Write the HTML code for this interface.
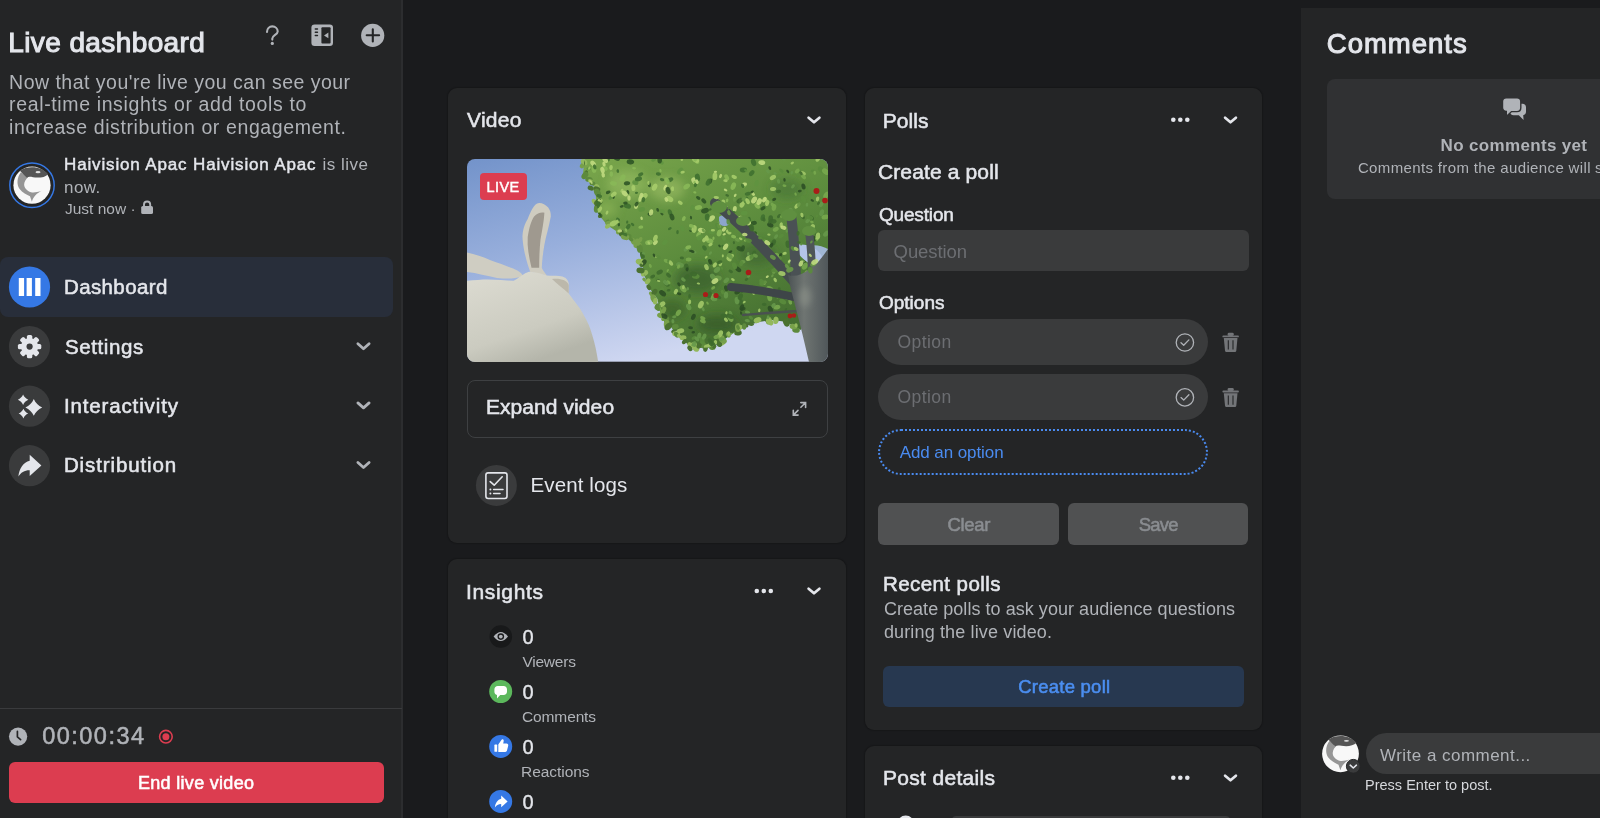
<!DOCTYPE html><html><head><meta charset="utf-8"><title>Live dashboard</title><style>
html,body{margin:0;padding:0}
body{width:1600px;height:818px;overflow:hidden;position:relative;background:#1a1b1d;font-family:"Liberation Sans",sans-serif}
.a{position:absolute}
.t{position:absolute;white-space:nowrap}
svg.a{overflow:visible}
</style></head><body>
<div class="a" style="left:0px;top:0px;width:402px;height:818px;background:#242526;border-radius:0px;"></div>
<div class="a" style="left:401px;top:0px;width:2px;height:818px;background:#2c2d2f;border-radius:0px;"></div>
<div class="a" style="left:0px;top:708px;width:402px;height:1px;background:#3a3b3d;border-radius:0px;"></div>
<svg class="a" style="left:260px;top:20px;" width="130" height="32" viewBox="260 20 130 32"><path d="M267 32 C267 28.6 269.4 26.4 272.3 26.4 C275.4 26.4 277.7 28.7 277.7 31.4 C277.7 34.6 272.3 35.2 272.3 38.6 V39.6" stroke="#b0b3b8" stroke-width="2.1" fill="none" stroke-linecap="round"/><circle cx="272.3" cy="43.4" r="1.6" fill="#b0b3b8"/><rect x="311.4" y="24.4" width="21.6" height="21.6" rx="3.2" fill="#b0b3b8"/><rect x="321.4" y="27.2" width="9.2" height="16.4" rx="1" fill="#242526"/><path d="M324 35.4 L328.4 32.6 V38.2 Z" fill="#b0b3b8"/><rect x="314.6" y="28.2" width="3.6" height="1.5" rx="0.7" fill="#242526"/><rect x="314.6" y="31.5" width="3.6" height="1.5" rx="0.7" fill="#242526"/><rect x="314.6" y="34.8" width="3.6" height="1.5" rx="0.7" fill="#242526"/><circle cx="372.7" cy="35.4" r="11.6" fill="#b0b3b8"/><path d="M366.7 35.3 H379.1 M372.8 29.2 V41.5" stroke="#242526" stroke-width="2.1" stroke-linecap="round"/></svg>
<svg class="a" style="left:5px;top:158px;" width="55" height="55" viewBox="5 158 55 55"><circle cx="32" cy="185.2" r="22.2" fill="none" stroke="#3578e5" stroke-width="1.45"/><circle cx="32" cy="185.2" r="18.6" fill="#f8f8f8"/><path d="M20.94 172.13 C16.92 177.16 16.42 184.19 19.43 188.72 C22.45 192.74 26.97 194.75 29.99 196.26 L31.90 201.79 C33.01 197.26 37.03 192.74 42.05 190.83 C37.03 192.24 34.01 192.74 30.99 192.24 C26.97 190.73 23.96 187.71 24.16 184.19 C24.36 181.18 25.97 179.17 27.98 177.16 Z" fill="#969696"/><path d="M19.73 170.62 C27.98 165.09 42.05 166.10 48.09 174.14 C45.07 177.66 38.03 177.96 33.01 177.16 C29.99 176.65 27.98 176.65 26.97 177.66 C23.96 175.15 21.95 173.14 19.73 170.62 Z" fill="#555555"/><ellipse cx="38.03" cy="172.13" rx="2.51" ry="1.01" fill="#e0e0e0"/></svg>
<svg class="a" style="left:138px;top:198px;" width="18" height="18" viewBox="138 198 18 18"><path d="M144 206.5 V204.5 C144 200.5 150.2 200.5 150.2 204.5 V206.5" stroke="#b0b3b8" stroke-width="1.9" fill="none"/><rect x="141.2" y="206" width="11.8" height="8" rx="1.6" fill="#b0b3b8"/></svg>
<div class="a" style="left:0px;top:257px;width:393px;height:60px;background:#282e3a;border-radius:8px;"></div>
<svg class="a" style="left:0px;top:260px;" width="60" height="230" viewBox="0 260 60 230"><circle cx="29.5" cy="287" r="20.6" fill="#3578e5"/><rect x="18.8" y="278" width="5.3" height="18" fill="#fff"/><rect x="26.6" y="278" width="5.3" height="18" fill="#fff"/><rect x="35.2" y="278" width="5.3" height="18" fill="#fff"/><circle cx="29.5" cy="346.6" r="20.6" fill="#3a3b3c"/><circle cx="29.5" cy="406.2" r="20.6" fill="#3a3b3c"/><circle cx="29.5" cy="465.7" r="20.6" fill="#3a3b3c"/><g fill="#e4e6eb"><circle cx="29.6" cy="346.6" r="8.6"/><rect x="26.9" y="334.9" width="5.4" height="23.4" rx="1.6" transform="rotate(0 29.6 346.6)"/><rect x="26.9" y="334.9" width="5.4" height="23.4" rx="1.6" transform="rotate(45 29.6 346.6)"/><rect x="26.9" y="334.9" width="5.4" height="23.4" rx="1.6" transform="rotate(90 29.6 346.6)"/><rect x="26.9" y="334.9" width="5.4" height="23.4" rx="1.6" transform="rotate(135 29.6 346.6)"/></g><circle cx="29.6" cy="346.6" r="3.1" fill="#3a3b3c"/><g fill="#e4e6eb"><path d="M33.8 399.0 C35.416999999999994 402.78 38.42 405.78299999999996 42.199999999999996 407.4 C38.42 409.017 35.416999999999994 412.02 33.8 415.79999999999995 C32.183 412.02 29.179999999999996 409.017 25.4 407.4 C29.179999999999996 405.78299999999996 32.183 402.78 33.8 399.0 Z"/><path d="M23.1 394.6 C24.101000000000003 396.94 25.96 398.79900000000004 28.3 399.8 C25.96 400.801 24.101000000000003 402.66 23.1 405.0 C22.099 402.66 20.240000000000002 400.801 17.900000000000002 399.8 C20.240000000000002 398.79900000000004 22.099 396.94 23.1 394.6 Z"/><path d="M23.4 408.8 C24.323999999999998 410.96000000000004 26.04 412.67600000000004 28.2 413.6 C26.04 414.524 24.323999999999998 416.24 23.4 418.40000000000003 C22.476 416.24 20.759999999999998 414.524 18.599999999999998 413.6 C20.759999999999998 412.67600000000004 22.476 410.96000000000004 23.4 408.8 Z"/></g><path d="M29.7 454.8 L41.4 465.5 L29.7 476 V470.3 C24.6 470.2 20.8 472.6 18.4 476.6 C19.1 468.6 23.4 462.2 29.7 460.8 Z" fill="#e4e6eb"/></svg>
<svg class="a" style="left:350px;top:335px;" width="30" height="140" viewBox="350 335 30 140"><path d="M357.9 343.7 L363.5 348.7 L369.1 343.7" stroke="#b0b3b8" stroke-width="2.8" fill="none" stroke-linecap="round" stroke-linejoin="round"/><path d="M357.9 402.9 L363.5 407.9 L369.1 402.9" stroke="#b0b3b8" stroke-width="2.8" fill="none" stroke-linecap="round" stroke-linejoin="round"/><path d="M357.9 462.5 L363.5 467.5 L369.1 462.5" stroke="#b0b3b8" stroke-width="2.8" fill="none" stroke-linecap="round" stroke-linejoin="round"/></svg>
<svg class="a" style="left:5px;top:724px;" width="175" height="26" viewBox="5 724 175 26"><circle cx="18.1" cy="736.6" r="9.15" fill="#b0b3b8"/><path d="M17.4 731.4 V736.9 L20.6 739.6" stroke="#242526" stroke-width="1.7" fill="none" stroke-linecap="round" stroke-linejoin="round"/><circle cx="165.9" cy="736.7" r="6.3" fill="none" stroke="#dc3d50" stroke-width="1.6"/><circle cx="165.9" cy="736.7" r="3.5" fill="#dc3d50"/></svg>
<div class="a" style="left:9.2px;top:762px;width:374.8px;height:41px;background:#dc3d50;border-radius:6px;"></div>
<div class="a" style="left:448px;top:88px;width:398.4px;height:454.6px;background:#242526;border-radius:9px;box-shadow:0 0 1px 0.5px rgba(0,0,0,0.16);"></div>
<div class="a" style="left:466.7px;top:159px;width:361.3px;height:202.7px;border-radius:8px;overflow:hidden"><svg width="361.3" height="202.7" viewBox="0 0 361.3 202.7" style="display:block">
<defs><linearGradient id="sky" x1="0" y1="0" x2="0.45" y2="1"><stop offset="0" stop-color="#7393ca"/><stop offset="0.45" stop-color="#98afdc"/><stop offset="1" stop-color="#cfd7f1"/></linearGradient>
<clipPath id="fc"><polygon points="118.0,-2.0 116.0,14.0 122.0,22.0 128.7,29.4 129.0,42.0 131.3,55.0 140.0,66.0 154.4,75.6 165.0,80.0 172.3,83.3 173.0,95.0 174.9,103.8 178.0,118.0 182.6,129.5 190.3,139.7 193.0,150.0 195.4,160.3 203.0,167.0 210.8,173.1 216.0,180.0 221.1,185.9 231.0,189.0 241.6,188.5 250.0,185.0 257.0,180.8 265.0,175.0 272.4,170.5 282.0,166.0 293.0,162.8 305.0,161.0 318.6,162.8 334.0,171.0 340.0,150.0 361.0,140.0 361.0,-2.0"/></clipPath>
<linearGradient id="fol" x1="0" y1="0" x2="0.6" y2="1"><stop offset="0" stop-color="#7aa64c"/><stop offset="0.6" stop-color="#5a8a3c"/><stop offset="1" stop-color="#456f31"/></linearGradient>
<linearGradient id="fur" x1="0" y1="0" x2="0.5" y2="1"><stop offset="0" stop-color="#dddcd2"/><stop offset="0.7" stop-color="#cbcbc0"/><stop offset="1" stop-color="#b4b5aa"/></linearGradient>
<linearGradient id="trunk" x1="0" y1="0" x2="1" y2="0"><stop offset="0" stop-color="#4c5354"/><stop offset="0.4" stop-color="#6f7572"/><stop offset="1" stop-color="#50575a"/></linearGradient>
<filter id="bl" x="-50%" y="-50%" width="200%" height="200%"><feGaussianBlur stdDeviation="5"/></filter><filter id="bl2" x="-50%" y="-50%" width="200%" height="200%"><feGaussianBlur stdDeviation="3"/></filter>
</defs>
<rect width="361.3" height="202.7" fill="url(#sky)"/>
<polygon points="118.0,-2.0 116.0,14.0 122.0,22.0 128.7,29.4 129.0,42.0 131.3,55.0 140.0,66.0 154.4,75.6 165.0,80.0 172.3,83.3 173.0,95.0 174.9,103.8 178.0,118.0 182.6,129.5 190.3,139.7 193.0,150.0 195.4,160.3 203.0,167.0 210.8,173.1 216.0,180.0 221.1,185.9 231.0,189.0 241.6,188.5 250.0,185.0 257.0,180.8 265.0,175.0 272.4,170.5 282.0,166.0 293.0,162.8 305.0,161.0 318.6,162.8 334.0,171.0 340.0,150.0 361.0,140.0 361.0,-2.0" fill="url(#fol)"/>
<g clip-path="url(#fc)"><g filter="url(#bl)">
<ellipse cx="230" cy="120" rx="22" ry="14" fill="#2f5226" opacity="0.55"/>
<ellipse cx="205" cy="150" rx="14" ry="10" fill="#2f5226" opacity="0.5"/>
<ellipse cx="290" cy="95" rx="18" ry="12" fill="#34582a" opacity="0.45"/>
<ellipse cx="250" cy="165" rx="20" ry="9" fill="#2c4c24" opacity="0.5"/>
<ellipse cx="320" cy="30" rx="16" ry="10" fill="#3a6330" opacity="0.4"/>
<ellipse cx="160" cy="25" rx="20" ry="14" fill="#a5c86a" opacity="0.45"/>
<ellipse cx="200" cy="30" rx="18" ry="12" fill="#b4d075" opacity="0.4"/>
<ellipse cx="140" cy="50" rx="10" ry="8" fill="#9cc060" opacity="0.45"/>
</g></g>
<ellipse cx="118.7" cy="5.6" rx="3.5" ry="2.4" transform="rotate(130 117.1 5.2)" fill="#77a04a"/>
<ellipse cx="117.8" cy="2.9" rx="3.4" ry="2.4" transform="rotate(24 117.6 1.0)" fill="#93b85c"/>
<ellipse cx="118.4" cy="4.3" rx="2.4" ry="1.7" transform="rotate(10 117.4 2.9)" fill="#93b85c"/>
<ellipse cx="121.9" cy="20.5" rx="3.7" ry="2.6" transform="rotate(3 121.8 21.7)" fill="#5d8a3c"/>
<ellipse cx="114.6" cy="12.6" rx="2.6" ry="1.8" transform="rotate(118 116.4 14.5)" fill="#4a7130"/>
<ellipse cx="118.2" cy="18.7" rx="4.1" ry="2.9" transform="rotate(127 118.6 17.5)" fill="#5d8a3c"/>
<ellipse cx="124.8" cy="29.9" rx="3.3" ry="2.3" transform="rotate(21 126.4 26.9)" fill="#4a7130"/>
<ellipse cx="122.6" cy="22.7" rx="2.7" ry="1.9" transform="rotate(27 124.1 24.3)" fill="#93b85c"/>
<ellipse cx="120.1" cy="20.9" rx="2.9" ry="2.0" transform="rotate(175 122.7 22.8)" fill="#5d8a3c"/>
<ellipse cx="126.0" cy="32.0" rx="4.3" ry="3.0" transform="rotate(101 128.8 32.1)" fill="#93b85c"/>
<ellipse cx="129.6" cy="29.7" rx="3.6" ry="2.6" transform="rotate(22 128.7 30.3)" fill="#4a7130"/>
<ellipse cx="129.6" cy="32.2" rx="4.4" ry="3.1" transform="rotate(63 128.8 33.6)" fill="#5d8a3c"/>
<ellipse cx="128.5" cy="43.6" rx="3.3" ry="2.3" transform="rotate(48 129.0 42.1)" fill="#93b85c"/>
<ellipse cx="131.0" cy="48.7" rx="4.5" ry="3.1" transform="rotate(98 130.2 48.6)" fill="#5d8a3c"/>
<ellipse cx="126.9" cy="49.5" rx="4.5" ry="3.1" transform="rotate(151 129.9 47.1)" fill="#4a7130"/>
<ellipse cx="137.9" cy="69.0" rx="2.2" ry="1.6" transform="rotate(154 140.0 66.0)" fill="#5d8a3c"/>
<ellipse cx="130.9" cy="53.5" rx="2.5" ry="1.8" transform="rotate(156 131.7 55.5)" fill="#4a7130"/>
<ellipse cx="135.9" cy="63.2" rx="3.1" ry="2.2" transform="rotate(162 138.5 64.1)" fill="#77a04a"/>
<ellipse cx="140.3" cy="64.8" rx="3.0" ry="2.1" transform="rotate(150 140.2 66.1)" fill="#93b85c"/>
<ellipse cx="150.9" cy="75.1" rx="2.5" ry="1.8" transform="rotate(79 152.0 74.0)" fill="#77a04a"/>
<ellipse cx="149.7" cy="75.5" rx="2.8" ry="1.9" transform="rotate(141 151.8 73.9)" fill="#77a04a"/>
<ellipse cx="161.1" cy="77.0" rx="3.1" ry="2.2" transform="rotate(12 161.7 78.6)" fill="#5d8a3c"/>
<ellipse cx="153.8" cy="77.8" rx="3.4" ry="2.4" transform="rotate(100 155.6 76.1)" fill="#4a7130"/>
<ellipse cx="158.3" cy="78.1" rx="4.3" ry="3.0" transform="rotate(17 158.9 77.5)" fill="#77a04a"/>
<ellipse cx="167.9" cy="81.8" rx="3.5" ry="2.4" transform="rotate(71 166.7 80.8)" fill="#77a04a"/>
<ellipse cx="168.8" cy="82.4" rx="2.7" ry="1.9" transform="rotate(114 171.7 83.0)" fill="#77a04a"/>
<ellipse cx="164.3" cy="81.1" rx="2.6" ry="1.8" transform="rotate(33 165.4 80.2)" fill="#5d8a3c"/>
<ellipse cx="174.5" cy="88.8" rx="4.2" ry="3.0" transform="rotate(176 172.6 87.5)" fill="#77a04a"/>
<ellipse cx="172.1" cy="90.0" rx="4.3" ry="3.0" transform="rotate(79 172.7 90.2)" fill="#5d8a3c"/>
<ellipse cx="171.7" cy="85.2" rx="3.7" ry="2.6" transform="rotate(81 172.3 83.5)" fill="#77a04a"/>
<ellipse cx="174.6" cy="105.5" rx="2.4" ry="1.7" transform="rotate(180 174.9 103.8)" fill="#77a04a"/>
<ellipse cx="173.3" cy="103.4" rx="4.3" ry="3.0" transform="rotate(19 174.5 102.0)" fill="#93b85c"/>
<ellipse cx="174.3" cy="101.4" rx="2.3" ry="1.6" transform="rotate(169 174.8 103.3)" fill="#93b85c"/>
<ellipse cx="173.4" cy="107.6" rx="2.2" ry="1.6" transform="rotate(29 176.1 109.2)" fill="#4a7130"/>
<ellipse cx="176.6" cy="118.0" rx="3.9" ry="2.7" transform="rotate(148 177.6 116.3)" fill="#93b85c"/>
<ellipse cx="173.7" cy="111.8" rx="4.1" ry="2.9" transform="rotate(7 176.3 110.1)" fill="#4a7130"/>
<ellipse cx="178.9" cy="126.4" rx="3.3" ry="2.3" transform="rotate(127 180.8 124.9)" fill="#93b85c"/>
<ellipse cx="177.7" cy="122.3" rx="2.2" ry="1.6" transform="rotate(51 179.2 120.9)" fill="#77a04a"/>
<ellipse cx="183.1" cy="127.2" rx="3.0" ry="2.1" transform="rotate(61 181.5 126.7)" fill="#4a7130"/>
<ellipse cx="185.9" cy="135.6" rx="2.8" ry="1.9" transform="rotate(51 185.7 133.6)" fill="#77a04a"/>
<ellipse cx="184.1" cy="132.1" rx="3.5" ry="2.5" transform="rotate(127 185.6 133.4)" fill="#4a7130"/>
<ellipse cx="189.6" cy="140.8" rx="4.2" ry="2.9" transform="rotate(70 189.0 138.0)" fill="#77a04a"/>
<ellipse cx="192.2" cy="143.0" rx="3.3" ry="2.3" transform="rotate(97 190.6 140.9)" fill="#93b85c"/>
<ellipse cx="193.3" cy="147.7" rx="3.8" ry="2.7" transform="rotate(82 192.1 146.6)" fill="#5d8a3c"/>
<ellipse cx="192.6" cy="149.6" rx="2.8" ry="2.0" transform="rotate(71 192.5 148.2)" fill="#4a7130"/>
<ellipse cx="190.8" cy="151.9" rx="4.0" ry="2.8" transform="rotate(116 193.7 153.2)" fill="#77a04a"/>
<ellipse cx="191.2" cy="149.0" rx="4.1" ry="2.9" transform="rotate(12 193.1 150.3)" fill="#5d8a3c"/>
<ellipse cx="194.3" cy="156.6" rx="3.6" ry="2.6" transform="rotate(19 194.1 154.6)" fill="#77a04a"/>
<ellipse cx="194.8" cy="159.7" rx="3.3" ry="2.3" transform="rotate(120 196.9 161.6)" fill="#5d8a3c"/>
<ellipse cx="195.5" cy="163.0" rx="2.8" ry="2.0" transform="rotate(133 196.8 161.5)" fill="#77a04a"/>
<ellipse cx="199.9" cy="161.4" rx="4.0" ry="2.8" transform="rotate(99 198.4 162.9)" fill="#77a04a"/>
<ellipse cx="208.0" cy="167.8" rx="2.7" ry="1.9" transform="rotate(140 206.5 169.7)" fill="#4a7130"/>
<ellipse cx="204.6" cy="171.4" rx="3.7" ry="2.6" transform="rotate(164 206.6 169.8)" fill="#5d8a3c"/>
<ellipse cx="206.6" cy="171.2" rx="4.3" ry="3.0" transform="rotate(137 204.7 168.3)" fill="#4a7130"/>
<ellipse cx="209.2" cy="175.4" rx="3.9" ry="2.7" transform="rotate(9 212.2 174.9)" fill="#93b85c"/>
<ellipse cx="211.0" cy="178.1" rx="3.2" ry="2.2" transform="rotate(55 212.6 175.5)" fill="#5d8a3c"/>
<ellipse cx="212.7" cy="177.5" rx="2.3" ry="1.6" transform="rotate(35 213.0 176.1)" fill="#93b85c"/>
<ellipse cx="217.4" cy="183.1" rx="3.4" ry="2.4" transform="rotate(176 216.8 180.9)" fill="#93b85c"/>
<ellipse cx="222.6" cy="184.0" rx="3.3" ry="2.3" transform="rotate(56 220.8 185.6)" fill="#93b85c"/>
<ellipse cx="219.3" cy="184.3" rx="2.9" ry="2.0" transform="rotate(133 218.7 183.1)" fill="#4a7130"/>
<ellipse cx="225.4" cy="189.4" rx="3.1" ry="2.2" transform="rotate(53 224.2 186.9)" fill="#4a7130"/>
<ellipse cx="229.1" cy="189.4" rx="4.4" ry="3.1" transform="rotate(51 229.5 188.5)" fill="#93b85c"/>
<ellipse cx="226.4" cy="185.7" rx="3.4" ry="2.4" transform="rotate(11 226.4 187.6)" fill="#93b85c"/>
<ellipse cx="234.4" cy="187.2" rx="4.5" ry="3.1" transform="rotate(42 236.8 188.7)" fill="#5d8a3c"/>
<ellipse cx="242.5" cy="190.5" rx="3.3" ry="2.3" transform="rotate(103 240.9 188.5)" fill="#4a7130"/>
<ellipse cx="232.3" cy="191.4" rx="3.3" ry="2.3" transform="rotate(121 233.6 188.9)" fill="#4a7130"/>
<ellipse cx="239.7" cy="187.4" rx="3.2" ry="2.2" transform="rotate(179 242.5 188.1)" fill="#5d8a3c"/>
<ellipse cx="239.0" cy="187.8" rx="2.6" ry="1.8" transform="rotate(90 241.9 188.4)" fill="#77a04a"/>
<ellipse cx="247.5" cy="184.9" rx="2.4" ry="1.7" transform="rotate(130 246.8 186.3)" fill="#4a7130"/>
<ellipse cx="256.4" cy="180.1" rx="3.8" ry="2.7" transform="rotate(162 255.0 182.0)" fill="#93b85c"/>
<ellipse cx="255.5" cy="183.9" rx="3.6" ry="2.5" transform="rotate(136 255.8 181.5)" fill="#77a04a"/>
<ellipse cx="253.8" cy="185.1" rx="4.2" ry="2.9" transform="rotate(59 253.7 182.8)" fill="#4a7130"/>
<ellipse cx="262.8" cy="178.2" rx="2.9" ry="2.0" transform="rotate(55 264.2 175.6)" fill="#77a04a"/>
<ellipse cx="262.3" cy="177.3" rx="2.5" ry="1.8" transform="rotate(66 264.1 175.7)" fill="#93b85c"/>
<ellipse cx="256.9" cy="182.2" rx="4.1" ry="2.9" transform="rotate(32 257.8 180.2)" fill="#77a04a"/>
<ellipse cx="265.1" cy="172.2" rx="3.8" ry="2.6" transform="rotate(174 268.0 173.2)" fill="#4a7130"/>
<ellipse cx="269.3" cy="171.4" rx="4.4" ry="3.1" transform="rotate(87 271.7 170.9)" fill="#77a04a"/>
<ellipse cx="268.1" cy="173.2" rx="3.3" ry="2.3" transform="rotate(157 270.9 171.4)" fill="#93b85c"/>
<ellipse cx="271.8" cy="172.0" rx="2.6" ry="1.8" transform="rotate(72 273.8 169.8)" fill="#5d8a3c"/>
<ellipse cx="278.4" cy="166.3" rx="2.5" ry="1.8" transform="rotate(24 278.0 167.9)" fill="#4a7130"/>
<ellipse cx="274.9" cy="167.8" rx="3.2" ry="2.2" transform="rotate(95 276.2 168.7)" fill="#5d8a3c"/>
<ellipse cx="287.0" cy="164.0" rx="2.3" ry="1.6" transform="rotate(92 289.0 164.0)" fill="#4a7130"/>
<ellipse cx="284.3" cy="165.3" rx="2.6" ry="1.9" transform="rotate(3 286.5 164.7)" fill="#4a7130"/>
<ellipse cx="292.3" cy="165.4" rx="4.0" ry="2.8" transform="rotate(161 291.8 163.1)" fill="#93b85c"/>
<ellipse cx="299.8" cy="161.5" rx="2.6" ry="1.8" transform="rotate(66 299.8 161.8)" fill="#4a7130"/>
<ellipse cx="304.8" cy="163.2" rx="3.9" ry="2.7" transform="rotate(103 303.9 161.2)" fill="#77a04a"/>
<ellipse cx="304.2" cy="163.0" rx="4.2" ry="3.0" transform="rotate(46 303.8 161.2)" fill="#93b85c"/>
<ellipse cx="308.8" cy="160.9" rx="2.6" ry="1.8" transform="rotate(25 307.8 161.4)" fill="#5d8a3c"/>
<ellipse cx="318.6" cy="160.8" rx="4.5" ry="3.1" transform="rotate(69 317.1 162.6)" fill="#4a7130"/>
<ellipse cx="309.4" cy="162.3" rx="3.7" ry="2.6" transform="rotate(99 309.6 161.6)" fill="#93b85c"/>
<ellipse cx="329.3" cy="171.0" rx="3.8" ry="2.7" transform="rotate(5 328.5 168.1)" fill="#5d8a3c"/>
<ellipse cx="326.4" cy="167.9" rx="3.9" ry="2.7" transform="rotate(12 328.1 167.8)" fill="#77a04a"/>
<ellipse cx="326.9" cy="167.5" rx="2.2" ry="1.6" transform="rotate(87 328.6 168.1)" fill="#93b85c"/>
<ellipse cx="341.8" cy="151.9" rx="3.5" ry="2.5" transform="rotate(165 339.8 150.7)" fill="#5d8a3c"/>
<ellipse cx="339.1" cy="159.4" rx="3.7" ry="2.6" transform="rotate(40 337.3 159.5)" fill="#93b85c"/>
<ellipse cx="336.3" cy="162.1" rx="2.6" ry="1.8" transform="rotate(14 336.8 161.1)" fill="#93b85c"/>
<path d="M252 58 C256 55 262 57 264 63 C261 68 255 68 252 64 Z" fill="#8fa7d6" opacity="0.75"/>
<g clip-path="url(#fc)">
<ellipse cx="347.4" cy="79.6" rx="2.9" ry="1.9" transform="rotate(79 347.4 79.6)" fill="#2c4f25" opacity="0.9"/>
<ellipse cx="203.0" cy="53.4" rx="3.2" ry="2.1" transform="rotate(72 203.0 53.4)" fill="#3f7030" opacity="0.9"/>
<ellipse cx="277.2" cy="143.1" rx="1.7" ry="1.1" transform="rotate(149 277.2 143.1)" fill="#a2c868" opacity="0.9"/>
<ellipse cx="122.7" cy="28.4" rx="3.4" ry="2.2" transform="rotate(13 122.7 28.4)" fill="#5f9440" opacity="0.9"/>
<ellipse cx="335.5" cy="143.2" rx="1.7" ry="1.1" transform="rotate(81 335.5 143.2)" fill="#66984a" opacity="0.9"/>
<ellipse cx="130.3" cy="173.7" rx="2.6" ry="1.7" transform="rotate(64 130.3 173.7)" fill="#3e6a2e" opacity="0.9"/>
<ellipse cx="354.3" cy="45.3" rx="2.9" ry="1.9" transform="rotate(119 354.3 45.3)" fill="#66984a" opacity="0.9"/>
<ellipse cx="147.9" cy="184.2" rx="2.2" ry="1.4" transform="rotate(29 147.9 184.2)" fill="#66984a" opacity="0.9"/>
<ellipse cx="124.5" cy="78.9" rx="1.9" ry="1.2" transform="rotate(91 124.5 78.9)" fill="#a6cc6a" opacity="0.9"/>
<ellipse cx="243.5" cy="22.1" rx="2.7" ry="1.7" transform="rotate(106 243.5 22.1)" fill="#2f5526" opacity="0.9"/>
<ellipse cx="225.4" cy="48.9" rx="3.0" ry="1.9" transform="rotate(93 225.4 48.9)" fill="#5f9440" opacity="0.9"/>
<ellipse cx="305.7" cy="101.0" rx="4.0" ry="2.6" transform="rotate(32 305.7 101.0)" fill="#5a8c3c" opacity="0.9"/>
<ellipse cx="171.4" cy="20.1" rx="3.7" ry="2.4" transform="rotate(159 171.4 20.1)" fill="#3f7030" opacity="0.9"/>
<ellipse cx="322.8" cy="51.3" rx="3.1" ry="2.0" transform="rotate(144 322.8 51.3)" fill="#66984a" opacity="0.9"/>
<ellipse cx="286.1" cy="34.9" rx="2.3" ry="1.5" transform="rotate(48 286.1 34.9)" fill="#c0da80" opacity="0.9"/>
<ellipse cx="349.0" cy="95.4" rx="3.2" ry="2.1" transform="rotate(174 349.0 95.4)" fill="#a2c868" opacity="0.9"/>
<ellipse cx="121.8" cy="9.8" rx="2.3" ry="1.5" transform="rotate(6 121.8 9.8)" fill="#5f9440" opacity="0.9"/>
<ellipse cx="267.2" cy="17.9" rx="2.9" ry="1.9" transform="rotate(22 267.2 17.9)" fill="#a6cc6a" opacity="0.9"/>
<ellipse cx="339.3" cy="29.2" rx="2.2" ry="1.4" transform="rotate(123 339.3 29.2)" fill="#5a8c3c" opacity="0.9"/>
<ellipse cx="231.2" cy="38.9" rx="2.4" ry="1.6" transform="rotate(34 231.2 38.9)" fill="#2f5526" opacity="0.9"/>
<ellipse cx="320.8" cy="12.4" rx="1.9" ry="1.2" transform="rotate(54 320.8 12.4)" fill="#2c4f25" opacity="0.9"/>
<ellipse cx="222.6" cy="143.0" rx="2.5" ry="1.6" transform="rotate(94 222.6 143.0)" fill="#a2c868" opacity="0.9"/>
<ellipse cx="150.2" cy="160.3" rx="3.0" ry="2.0" transform="rotate(140 150.2 160.3)" fill="#5a8c3c" opacity="0.9"/>
<ellipse cx="301.0" cy="158.3" rx="2.0" ry="1.3" transform="rotate(94 301.0 158.3)" fill="#66984a" opacity="0.9"/>
<ellipse cx="256.6" cy="87.6" rx="2.4" ry="1.5" transform="rotate(21 256.6 87.6)" fill="#3f7030" opacity="0.9"/>
<ellipse cx="219.6" cy="108.2" rx="3.6" ry="2.3" transform="rotate(76 219.6 108.2)" fill="#3e6a2e" opacity="0.9"/>
<ellipse cx="317.1" cy="-0.2" rx="2.3" ry="1.5" transform="rotate(154 317.1 -0.2)" fill="#66984a" opacity="0.9"/>
<ellipse cx="132.3" cy="56.9" rx="3.3" ry="2.2" transform="rotate(83 132.3 56.9)" fill="#2f5526" opacity="0.9"/>
<ellipse cx="182.4" cy="25.7" rx="2.5" ry="1.6" transform="rotate(83 182.4 25.7)" fill="#2f5526" opacity="0.9"/>
<ellipse cx="203.2" cy="20.8" rx="3.3" ry="2.1" transform="rotate(152 203.2 20.8)" fill="#3f7030" opacity="0.9"/>
<ellipse cx="340.7" cy="180.3" rx="3.8" ry="2.5" transform="rotate(135 340.7 180.3)" fill="#3e6a2e" opacity="0.9"/>
<ellipse cx="312.0" cy="57.1" rx="2.4" ry="1.5" transform="rotate(132 312.0 57.1)" fill="#3e6a2e" opacity="0.9"/>
<ellipse cx="173.8" cy="68.2" rx="2.5" ry="1.6" transform="rotate(173 173.8 68.2)" fill="#88b858" opacity="0.9"/>
<ellipse cx="210.5" cy="73.2" rx="2.1" ry="1.3" transform="rotate(94 210.5 73.2)" fill="#3f7030" opacity="0.9"/>
<ellipse cx="310.5" cy="102.9" rx="3.6" ry="2.3" transform="rotate(45 310.5 102.9)" fill="#2c4f25" opacity="0.9"/>
<ellipse cx="156.0" cy="145.2" rx="3.7" ry="2.4" transform="rotate(5 156.0 145.2)" fill="#5a8c3c" opacity="0.9"/>
<ellipse cx="167.1" cy="9.2" rx="2.0" ry="1.3" transform="rotate(5 167.1 9.2)" fill="#88b858" opacity="0.9"/>
<ellipse cx="274.1" cy="154.0" rx="1.8" ry="1.1" transform="rotate(78 274.1 154.0)" fill="#2c4f25" opacity="0.9"/>
<ellipse cx="308.2" cy="14.3" rx="1.8" ry="1.2" transform="rotate(26 308.2 14.3)" fill="#66984a" opacity="0.9"/>
<ellipse cx="335.9" cy="14.4" rx="3.1" ry="2.0" transform="rotate(24 335.9 14.4)" fill="#a2c868" opacity="0.9"/>
<ellipse cx="297.7" cy="123.9" rx="2.2" ry="1.4" transform="rotate(125 297.7 123.9)" fill="#a2c868" opacity="0.9"/>
<ellipse cx="302.6" cy="99.2" rx="3.4" ry="2.2" transform="rotate(89 302.6 99.2)" fill="#3e6a2e" opacity="0.9"/>
<ellipse cx="196.1" cy="185.8" rx="3.2" ry="2.1" transform="rotate(124 196.1 185.8)" fill="#3e6a2e" opacity="0.9"/>
<ellipse cx="245.8" cy="137.9" rx="3.3" ry="2.1" transform="rotate(105 245.8 137.9)" fill="#78a84e" opacity="0.9"/>
<ellipse cx="300.5" cy="189.2" rx="2.4" ry="1.6" transform="rotate(96 300.5 189.2)" fill="#78a84e" opacity="0.9"/>
<ellipse cx="319.6" cy="170.4" rx="3.9" ry="2.5" transform="rotate(6 319.6 170.4)" fill="#66984a" opacity="0.9"/>
<ellipse cx="242.4" cy="135.8" rx="3.5" ry="2.3" transform="rotate(107 242.4 135.8)" fill="#3e6a2e" opacity="0.9"/>
<ellipse cx="340.0" cy="45.7" rx="2.0" ry="1.3" transform="rotate(96 340.0 45.7)" fill="#66984a" opacity="0.9"/>
<ellipse cx="282.3" cy="60.3" rx="2.5" ry="1.6" transform="rotate(74 282.3 60.3)" fill="#3f7030" opacity="0.9"/>
<ellipse cx="180.2" cy="169.9" rx="2.7" ry="1.8" transform="rotate(29 180.2 169.9)" fill="#66984a" opacity="0.9"/>
<ellipse cx="187.6" cy="28.2" rx="3.8" ry="2.5" transform="rotate(117 187.6 28.2)" fill="#a6cc6a" opacity="0.9"/>
<ellipse cx="116.3" cy="91.3" rx="3.5" ry="2.3" transform="rotate(27 116.3 91.3)" fill="#5a8c3c" opacity="0.9"/>
<ellipse cx="161.2" cy="67.7" rx="3.0" ry="2.0" transform="rotate(120 161.2 67.7)" fill="#3f7030" opacity="0.9"/>
<ellipse cx="260.1" cy="41.4" rx="2.0" ry="1.3" transform="rotate(103 260.1 41.4)" fill="#88b858" opacity="0.9"/>
<ellipse cx="155.0" cy="145.0" rx="2.3" ry="1.5" transform="rotate(140 155.0 145.0)" fill="#2c4f25" opacity="0.9"/>
<ellipse cx="231.4" cy="48.5" rx="3.7" ry="2.4" transform="rotate(169 231.4 48.5)" fill="#88b858" opacity="0.9"/>
<ellipse cx="248.3" cy="183.7" rx="2.8" ry="1.8" transform="rotate(102 248.3 183.7)" fill="#a2c868" opacity="0.9"/>
<ellipse cx="124.4" cy="181.8" rx="3.5" ry="2.3" transform="rotate(135 124.4 181.8)" fill="#3e6a2e" opacity="0.9"/>
<ellipse cx="309.9" cy="148.2" rx="3.5" ry="2.3" transform="rotate(168 309.9 148.2)" fill="#78a84e" opacity="0.9"/>
<ellipse cx="342.1" cy="171.1" rx="3.7" ry="2.4" transform="rotate(115 342.1 171.1)" fill="#5a8c3c" opacity="0.9"/>
<ellipse cx="310.4" cy="136.4" rx="3.1" ry="2.0" transform="rotate(106 310.4 136.4)" fill="#a2c868" opacity="0.9"/>
<ellipse cx="151.1" cy="60.4" rx="2.2" ry="1.4" transform="rotate(33 151.1 60.4)" fill="#3f7030" opacity="0.9"/>
<ellipse cx="270.6" cy="190.7" rx="2.2" ry="1.5" transform="rotate(13 270.6 190.7)" fill="#2c4f25" opacity="0.9"/>
<ellipse cx="149.5" cy="147.5" rx="1.6" ry="1.0" transform="rotate(32 149.5 147.5)" fill="#a2c868" opacity="0.9"/>
<ellipse cx="132.5" cy="50.4" rx="3.3" ry="2.2" transform="rotate(122 132.5 50.4)" fill="#a6cc6a" opacity="0.9"/>
<ellipse cx="284.7" cy="14.1" rx="3.4" ry="2.2" transform="rotate(129 284.7 14.1)" fill="#3f7030" opacity="0.9"/>
<ellipse cx="187.6" cy="151.1" rx="2.6" ry="1.7" transform="rotate(23 187.6 151.1)" fill="#66984a" opacity="0.9"/>
<ellipse cx="306.6" cy="83.4" rx="1.7" ry="1.1" transform="rotate(134 306.6 83.4)" fill="#3e6a2e" opacity="0.9"/>
<ellipse cx="235.1" cy="181.6" rx="3.9" ry="2.5" transform="rotate(79 235.1 181.6)" fill="#5a8c3c" opacity="0.9"/>
<ellipse cx="213.0" cy="105.9" rx="4.0" ry="2.6" transform="rotate(17 213.0 105.9)" fill="#66984a" opacity="0.9"/>
<ellipse cx="201.6" cy="131.3" rx="1.9" ry="1.2" transform="rotate(173 201.6 131.3)" fill="#3e6a2e" opacity="0.9"/>
<ellipse cx="227.0" cy="185.6" rx="3.6" ry="2.3" transform="rotate(113 227.0 185.6)" fill="#66984a" opacity="0.9"/>
<ellipse cx="115.1" cy="71.2" rx="3.3" ry="2.1" transform="rotate(75 115.1 71.2)" fill="#c0da80" opacity="0.9"/>
<ellipse cx="252.5" cy="86.9" rx="1.6" ry="1.1" transform="rotate(52 252.5 86.9)" fill="#2f5526" opacity="0.9"/>
<ellipse cx="336.5" cy="27.5" rx="3.1" ry="2.0" transform="rotate(76 336.5 27.5)" fill="#2c4f25" opacity="0.9"/>
<ellipse cx="349.6" cy="144.5" rx="2.9" ry="1.9" transform="rotate(65 349.6 144.5)" fill="#78a84e" opacity="0.9"/>
<ellipse cx="159.0" cy="71.1" rx="1.9" ry="1.2" transform="rotate(70 159.0 71.1)" fill="#88b858" opacity="0.9"/>
<ellipse cx="252.1" cy="138.4" rx="2.4" ry="1.6" transform="rotate(23 252.1 138.4)" fill="#3e6a2e" opacity="0.9"/>
<ellipse cx="137.4" cy="118.6" rx="1.9" ry="1.2" transform="rotate(45 137.4 118.6)" fill="#66984a" opacity="0.9"/>
<ellipse cx="156.8" cy="76.0" rx="3.6" ry="2.3" transform="rotate(180 156.8 76.0)" fill="#3f7030" opacity="0.9"/>
<ellipse cx="134.4" cy="42.0" rx="2.0" ry="1.3" transform="rotate(111 134.4 42.0)" fill="#a6cc6a" opacity="0.9"/>
<ellipse cx="213.3" cy="12.1" rx="3.8" ry="2.5" transform="rotate(130 213.3 12.1)" fill="#5f9440" opacity="0.9"/>
<ellipse cx="146.6" cy="37.9" rx="2.0" ry="1.3" transform="rotate(98 146.6 37.9)" fill="#2f5526" opacity="0.9"/>
<ellipse cx="232.2" cy="176.7" rx="3.1" ry="2.0" transform="rotate(102 232.2 176.7)" fill="#66984a" opacity="0.9"/>
<ellipse cx="264.7" cy="59.6" rx="3.5" ry="2.3" transform="rotate(169 264.7 59.6)" fill="#c0da80" opacity="0.9"/>
<ellipse cx="357.4" cy="100.8" rx="2.2" ry="1.4" transform="rotate(87 357.4 100.8)" fill="#a2c868" opacity="0.9"/>
<ellipse cx="188.4" cy="83.6" rx="2.9" ry="1.9" transform="rotate(130 188.4 83.6)" fill="#c0da80" opacity="0.9"/>
<ellipse cx="194.9" cy="54.9" rx="1.8" ry="1.2" transform="rotate(40 194.9 54.9)" fill="#2f5526" opacity="0.9"/>
<ellipse cx="175.2" cy="102.5" rx="2.3" ry="1.5" transform="rotate(90 175.2 102.5)" fill="#a2c868" opacity="0.9"/>
<ellipse cx="264.4" cy="97.6" rx="3.0" ry="1.9" transform="rotate(132 264.4 97.6)" fill="#a2c868" opacity="0.9"/>
<ellipse cx="360.6" cy="135.1" rx="3.8" ry="2.5" transform="rotate(6 360.6 135.1)" fill="#2c4f25" opacity="0.9"/>
<ellipse cx="268.2" cy="36.4" rx="1.8" ry="1.2" transform="rotate(122 268.2 36.4)" fill="#c0da80" opacity="0.9"/>
<ellipse cx="255.5" cy="133.2" rx="2.4" ry="1.6" transform="rotate(68 255.5 133.2)" fill="#5a8c3c" opacity="0.9"/>
<ellipse cx="227.3" cy="22.1" rx="3.9" ry="2.6" transform="rotate(61 227.3 22.1)" fill="#c0da80" opacity="0.9"/>
<ellipse cx="337.1" cy="103.4" rx="2.9" ry="1.9" transform="rotate(67 337.1 103.4)" fill="#2c4f25" opacity="0.9"/>
<ellipse cx="154.0" cy="142.7" rx="3.8" ry="2.4" transform="rotate(153 154.0 142.7)" fill="#5a8c3c" opacity="0.9"/>
<ellipse cx="148.3" cy="179.2" rx="1.6" ry="1.0" transform="rotate(93 148.3 179.2)" fill="#66984a" opacity="0.9"/>
<ellipse cx="172.0" cy="109.3" rx="3.6" ry="2.3" transform="rotate(152 172.0 109.3)" fill="#a2c868" opacity="0.9"/>
<ellipse cx="248.4" cy="12.8" rx="1.7" ry="1.1" transform="rotate(168 248.4 12.8)" fill="#c0da80" opacity="0.9"/>
<ellipse cx="146.4" cy="144.7" rx="3.6" ry="2.4" transform="rotate(157 146.4 144.7)" fill="#3e6a2e" opacity="0.9"/>
<ellipse cx="259.4" cy="153.9" rx="1.6" ry="1.1" transform="rotate(105 259.4 153.9)" fill="#a2c868" opacity="0.9"/>
<ellipse cx="228.5" cy="25.7" rx="2.5" ry="1.6" transform="rotate(103 228.5 25.7)" fill="#3f7030" opacity="0.9"/>
<ellipse cx="155.2" cy="98.8" rx="2.2" ry="1.5" transform="rotate(85 155.2 98.8)" fill="#2c4f25" opacity="0.9"/>
<ellipse cx="125.3" cy="150.1" rx="3.3" ry="2.2" transform="rotate(103 125.3 150.1)" fill="#a2c868" opacity="0.9"/>
<ellipse cx="350.9" cy="114.4" rx="2.7" ry="1.8" transform="rotate(159 350.9 114.4)" fill="#3e6a2e" opacity="0.9"/>
<ellipse cx="339.4" cy="107.6" rx="2.6" ry="1.7" transform="rotate(124 339.4 107.6)" fill="#5a8c3c" opacity="0.9"/>
<ellipse cx="333.4" cy="87.9" rx="3.8" ry="2.5" transform="rotate(104 333.4 87.9)" fill="#66984a" opacity="0.9"/>
<ellipse cx="317.5" cy="20.8" rx="1.9" ry="1.2" transform="rotate(84 317.5 20.8)" fill="#2c4f25" opacity="0.9"/>
<ellipse cx="242.7" cy="81.9" rx="3.8" ry="2.5" transform="rotate(13 242.7 81.9)" fill="#88b858" opacity="0.9"/>
<ellipse cx="185.7" cy="117.5" rx="2.6" ry="1.7" transform="rotate(152 185.7 117.5)" fill="#3e6a2e" opacity="0.9"/>
<ellipse cx="192.2" cy="151.2" rx="3.7" ry="2.4" transform="rotate(62 192.2 151.2)" fill="#78a84e" opacity="0.9"/>
<ellipse cx="143.0" cy="84.7" rx="2.8" ry="1.8" transform="rotate(13 143.0 84.7)" fill="#5f9440" opacity="0.9"/>
<ellipse cx="230.5" cy="18.4" rx="3.8" ry="2.5" transform="rotate(78 230.5 18.4)" fill="#3f7030" opacity="0.9"/>
<ellipse cx="275.6" cy="180.4" rx="3.7" ry="2.4" transform="rotate(170 275.6 180.4)" fill="#66984a" opacity="0.9"/>
<ellipse cx="203.8" cy="104.0" rx="3.0" ry="1.9" transform="rotate(56 203.8 104.0)" fill="#a2c868" opacity="0.9"/>
<ellipse cx="273.7" cy="79.8" rx="1.9" ry="1.2" transform="rotate(25 273.7 79.8)" fill="#a6cc6a" opacity="0.9"/>
<ellipse cx="241.4" cy="23.2" rx="3.7" ry="2.4" transform="rotate(116 241.4 23.2)" fill="#3f7030" opacity="0.9"/>
<ellipse cx="112.1" cy="45.3" rx="2.3" ry="1.5" transform="rotate(44 112.1 45.3)" fill="#88b858" opacity="0.9"/>
<ellipse cx="127.6" cy="171.7" rx="3.6" ry="2.3" transform="rotate(36 127.6 171.7)" fill="#3e6a2e" opacity="0.9"/>
<ellipse cx="200.8" cy="111.6" rx="1.7" ry="1.1" transform="rotate(116 200.8 111.6)" fill="#78a84e" opacity="0.9"/>
<ellipse cx="335.7" cy="57.7" rx="2.8" ry="1.8" transform="rotate(52 335.7 57.7)" fill="#3e6a2e" opacity="0.9"/>
<ellipse cx="162.5" cy="164.6" rx="3.3" ry="2.1" transform="rotate(50 162.5 164.6)" fill="#78a84e" opacity="0.9"/>
<ellipse cx="190.7" cy="164.7" rx="3.8" ry="2.4" transform="rotate(44 190.7 164.7)" fill="#78a84e" opacity="0.9"/>
<ellipse cx="270.2" cy="133.4" rx="2.9" ry="1.9" transform="rotate(161 270.2 133.4)" fill="#2c4f25" opacity="0.9"/>
<ellipse cx="170.8" cy="182.2" rx="3.9" ry="2.6" transform="rotate(27 170.8 182.2)" fill="#66984a" opacity="0.9"/>
<ellipse cx="188.2" cy="156.6" rx="3.9" ry="2.5" transform="rotate(107 188.2 156.6)" fill="#5a8c3c" opacity="0.9"/>
<ellipse cx="289.6" cy="24.2" rx="3.3" ry="2.1" transform="rotate(106 289.6 24.2)" fill="#5f9440" opacity="0.9"/>
<ellipse cx="131.7" cy="41.3" rx="2.3" ry="1.5" transform="rotate(176 131.7 41.3)" fill="#2f5526" opacity="0.9"/>
<ellipse cx="160.9" cy="33.1" rx="2.2" ry="1.4" transform="rotate(75 160.9 33.1)" fill="#2f5526" opacity="0.9"/>
<ellipse cx="308.8" cy="70.3" rx="3.2" ry="2.1" transform="rotate(151 308.8 70.3)" fill="#78a84e" opacity="0.9"/>
<ellipse cx="240.5" cy="187.6" rx="3.7" ry="2.4" transform="rotate(170 240.5 187.6)" fill="#a2c868" opacity="0.9"/>
<ellipse cx="168.3" cy="23.7" rx="3.2" ry="2.1" transform="rotate(19 168.3 23.7)" fill="#5f9440" opacity="0.9"/>
<ellipse cx="221.6" cy="100.5" rx="2.9" ry="1.9" transform="rotate(1 221.6 100.5)" fill="#78a84e" opacity="0.9"/>
<ellipse cx="261.3" cy="53.2" rx="2.2" ry="1.4" transform="rotate(22 261.3 53.2)" fill="#3f7030" opacity="0.9"/>
<ellipse cx="153.0" cy="189.7" rx="2.1" ry="1.3" transform="rotate(71 153.0 189.7)" fill="#a2c868" opacity="0.9"/>
<ellipse cx="294.8" cy="3.6" rx="3.5" ry="2.3" transform="rotate(8 294.8 3.6)" fill="#c0da80" opacity="0.9"/>
<ellipse cx="266.9" cy="175.8" rx="3.0" ry="2.0" transform="rotate(127 266.9 175.8)" fill="#78a84e" opacity="0.9"/>
<ellipse cx="127.0" cy="10.4" rx="3.5" ry="2.3" transform="rotate(82 127.0 10.4)" fill="#88b858" opacity="0.9"/>
<ellipse cx="275.9" cy="149.9" rx="2.8" ry="1.8" transform="rotate(162 275.9 149.9)" fill="#2c4f25" opacity="0.9"/>
<ellipse cx="282.4" cy="99.0" rx="3.9" ry="2.5" transform="rotate(152 282.4 99.0)" fill="#a2c868" opacity="0.9"/>
<ellipse cx="306.1" cy="30.0" rx="3.1" ry="2.0" transform="rotate(171 306.1 30.0)" fill="#a2c868" opacity="0.9"/>
<ellipse cx="221.7" cy="148.0" rx="3.5" ry="2.3" transform="rotate(60 221.7 148.0)" fill="#66984a" opacity="0.9"/>
<ellipse cx="176.7" cy="103.6" rx="3.6" ry="2.4" transform="rotate(127 176.7 103.6)" fill="#2c4f25" opacity="0.9"/>
<ellipse cx="177.1" cy="37.3" rx="3.9" ry="2.6" transform="rotate(146 177.1 37.3)" fill="#a6cc6a" opacity="0.9"/>
<ellipse cx="223.6" cy="168.8" rx="2.4" ry="1.5" transform="rotate(4 223.6 168.8)" fill="#2c4f25" opacity="0.9"/>
<ellipse cx="263.5" cy="154.4" rx="2.8" ry="1.8" transform="rotate(67 263.5 154.4)" fill="#66984a" opacity="0.9"/>
<ellipse cx="325.3" cy="4.0" rx="1.9" ry="1.2" transform="rotate(145 325.3 4.0)" fill="#a2c868" opacity="0.9"/>
<ellipse cx="271.3" cy="110.4" rx="3.3" ry="2.2" transform="rotate(37 271.3 110.4)" fill="#2c4f25" opacity="0.9"/>
<ellipse cx="125.4" cy="80.5" rx="3.3" ry="2.1" transform="rotate(134 125.4 80.5)" fill="#3f7030" opacity="0.9"/>
<ellipse cx="306.4" cy="146.5" rx="2.8" ry="1.8" transform="rotate(130 306.4 146.5)" fill="#66984a" opacity="0.9"/>
<ellipse cx="154.7" cy="47.4" rx="2.0" ry="1.3" transform="rotate(168 154.7 47.4)" fill="#2f5526" opacity="0.9"/>
<ellipse cx="318.9" cy="150.6" rx="1.7" ry="1.1" transform="rotate(119 318.9 150.6)" fill="#3e6a2e" opacity="0.9"/>
<ellipse cx="202.7" cy="40.0" rx="3.9" ry="2.6" transform="rotate(32 202.7 40.0)" fill="#a6cc6a" opacity="0.9"/>
<ellipse cx="233.9" cy="145.7" rx="4.0" ry="2.6" transform="rotate(116 233.9 145.7)" fill="#a2c868" opacity="0.9"/>
<ellipse cx="241.9" cy="189.2" rx="1.6" ry="1.0" transform="rotate(134 241.9 189.2)" fill="#3e6a2e" opacity="0.9"/>
<ellipse cx="147.2" cy="74.2" rx="2.3" ry="1.5" transform="rotate(19 147.2 74.2)" fill="#5f9440" opacity="0.9"/>
<ellipse cx="353.9" cy="129.9" rx="3.3" ry="2.2" transform="rotate(156 353.9 129.9)" fill="#66984a" opacity="0.9"/>
<ellipse cx="169.2" cy="47.1" rx="2.9" ry="1.9" transform="rotate(107 169.2 47.1)" fill="#c0da80" opacity="0.9"/>
<ellipse cx="226.9" cy="178.9" rx="2.5" ry="1.6" transform="rotate(156 226.9 178.9)" fill="#5a8c3c" opacity="0.9"/>
<ellipse cx="166.4" cy="29.1" rx="3.0" ry="2.0" transform="rotate(87 166.4 29.1)" fill="#a6cc6a" opacity="0.9"/>
<ellipse cx="253.3" cy="174.9" rx="3.7" ry="2.4" transform="rotate(118 253.3 174.9)" fill="#a2c868" opacity="0.9"/>
<ellipse cx="326.1" cy="179.5" rx="2.1" ry="1.4" transform="rotate(12 326.1 179.5)" fill="#3e6a2e" opacity="0.9"/>
<ellipse cx="165.6" cy="65.4" rx="2.0" ry="1.3" transform="rotate(41 165.6 65.4)" fill="#3f7030" opacity="0.9"/>
<ellipse cx="231.6" cy="75.6" rx="3.0" ry="2.0" transform="rotate(120 231.6 75.6)" fill="#88b858" opacity="0.9"/>
<ellipse cx="223.3" cy="190.7" rx="3.2" ry="2.1" transform="rotate(52 223.3 190.7)" fill="#3e6a2e" opacity="0.9"/>
<ellipse cx="246.5" cy="79.3" rx="1.7" ry="1.1" transform="rotate(92 246.5 79.3)" fill="#88b858" opacity="0.9"/>
<ellipse cx="348.2" cy="118.5" rx="2.8" ry="1.8" transform="rotate(67 348.2 118.5)" fill="#66984a" opacity="0.9"/>
<ellipse cx="239.5" cy="108.1" rx="3.2" ry="2.1" transform="rotate(68 239.5 108.1)" fill="#a2c868" opacity="0.9"/>
<ellipse cx="137.7" cy="9.1" rx="3.3" ry="2.2" transform="rotate(35 137.7 9.1)" fill="#88b858" opacity="0.9"/>
<ellipse cx="302.7" cy="138.4" rx="3.8" ry="2.5" transform="rotate(82 302.7 138.4)" fill="#78a84e" opacity="0.9"/>
<ellipse cx="320.9" cy="85.3" rx="3.7" ry="2.4" transform="rotate(83 320.9 85.3)" fill="#3e6a2e" opacity="0.9"/>
<ellipse cx="175.8" cy="168.5" rx="3.2" ry="2.1" transform="rotate(100 175.8 168.5)" fill="#5a8c3c" opacity="0.9"/>
<ellipse cx="263.4" cy="92.8" rx="2.1" ry="1.3" transform="rotate(152 263.4 92.8)" fill="#2c4f25" opacity="0.9"/>
<ellipse cx="143.8" cy="38.5" rx="2.6" ry="1.7" transform="rotate(139 143.8 38.5)" fill="#5f9440" opacity="0.9"/>
<ellipse cx="284.8" cy="98.3" rx="2.9" ry="1.9" transform="rotate(115 284.8 98.3)" fill="#5a8c3c" opacity="0.9"/>
<ellipse cx="277.9" cy="26.6" rx="2.1" ry="1.4" transform="rotate(136 277.9 26.6)" fill="#88b858" opacity="0.9"/>
<ellipse cx="289.5" cy="76.6" rx="2.5" ry="1.6" transform="rotate(57 289.5 76.6)" fill="#88b858" opacity="0.9"/>
<ellipse cx="137.6" cy="69.9" rx="3.1" ry="2.0" transform="rotate(10 137.6 69.9)" fill="#c0da80" opacity="0.9"/>
<ellipse cx="323.2" cy="142.9" rx="2.8" ry="1.8" transform="rotate(76 323.2 142.9)" fill="#78a84e" opacity="0.9"/>
<ellipse cx="276.4" cy="11.0" rx="3.6" ry="2.4" transform="rotate(176 276.4 11.0)" fill="#3f7030" opacity="0.9"/>
<ellipse cx="200.0" cy="21.7" rx="3.5" ry="2.2" transform="rotate(60 200.0 21.7)" fill="#88b858" opacity="0.9"/>
<ellipse cx="307.0" cy="48.4" rx="3.5" ry="2.3" transform="rotate(100 307.0 48.4)" fill="#78a84e" opacity="0.9"/>
<ellipse cx="234.7" cy="93.0" rx="3.8" ry="2.5" transform="rotate(127 234.7 93.0)" fill="#5a8c3c" opacity="0.9"/>
<ellipse cx="287.1" cy="41.0" rx="3.8" ry="2.5" transform="rotate(121 287.1 41.0)" fill="#c0da80" opacity="0.9"/>
<ellipse cx="303.3" cy="66.0" rx="3.3" ry="2.2" transform="rotate(23 303.3 66.0)" fill="#2c4f25" opacity="0.9"/>
<ellipse cx="297.0" cy="174.1" rx="3.5" ry="2.3" transform="rotate(149 297.0 174.1)" fill="#3e6a2e" opacity="0.9"/>
<ellipse cx="176.0" cy="163.5" rx="2.3" ry="1.5" transform="rotate(100 176.0 163.5)" fill="#78a84e" opacity="0.9"/>
<ellipse cx="142.0" cy="174.5" rx="3.8" ry="2.5" transform="rotate(13 142.0 174.5)" fill="#5a8c3c" opacity="0.9"/>
<ellipse cx="205.9" cy="162.3" rx="2.3" ry="1.5" transform="rotate(83 205.9 162.3)" fill="#66984a" opacity="0.9"/>
<ellipse cx="332.6" cy="12.0" rx="1.7" ry="1.1" transform="rotate(95 332.6 12.0)" fill="#5a8c3c" opacity="0.9"/>
<ellipse cx="252.9" cy="48.8" rx="3.2" ry="2.1" transform="rotate(164 252.9 48.8)" fill="#c0da80" opacity="0.9"/>
<ellipse cx="228.8" cy="117.4" rx="3.9" ry="2.5" transform="rotate(7 228.8 117.4)" fill="#5a8c3c" opacity="0.9"/>
<ellipse cx="255.5" cy="180.8" rx="3.5" ry="2.2" transform="rotate(12 255.5 180.8)" fill="#66984a" opacity="0.9"/>
<ellipse cx="266.6" cy="77.7" rx="2.6" ry="1.7" transform="rotate(17 266.6 77.7)" fill="#88b858" opacity="0.9"/>
<ellipse cx="318.6" cy="168.7" rx="2.5" ry="1.6" transform="rotate(9 318.6 168.7)" fill="#3e6a2e" opacity="0.9"/>
<ellipse cx="312.2" cy="130.6" rx="2.3" ry="1.5" transform="rotate(92 312.2 130.6)" fill="#3e6a2e" opacity="0.9"/>
<ellipse cx="229.8" cy="2.1" rx="3.1" ry="2.0" transform="rotate(58 229.8 2.1)" fill="#88b858" opacity="0.9"/>
<ellipse cx="176.3" cy="40.7" rx="2.8" ry="1.9" transform="rotate(100 176.3 40.7)" fill="#3f7030" opacity="0.9"/>
<ellipse cx="112.9" cy="104.1" rx="3.6" ry="2.4" transform="rotate(20 112.9 104.1)" fill="#2c4f25" opacity="0.9"/>
<ellipse cx="267.5" cy="106.8" rx="3.6" ry="2.3" transform="rotate(67 267.5 106.8)" fill="#5a8c3c" opacity="0.9"/>
<ellipse cx="198.3" cy="169.9" rx="2.4" ry="1.5" transform="rotate(53 198.3 169.9)" fill="#66984a" opacity="0.9"/>
<ellipse cx="285.2" cy="131.2" rx="3.9" ry="2.5" transform="rotate(40 285.2 131.2)" fill="#a2c868" opacity="0.9"/>
<ellipse cx="194.9" cy="131.7" rx="3.5" ry="2.3" transform="rotate(94 194.9 131.7)" fill="#5a8c3c" opacity="0.9"/>
<ellipse cx="215.3" cy="69.2" rx="3.2" ry="2.1" transform="rotate(60 215.3 69.2)" fill="#5f9440" opacity="0.9"/>
<ellipse cx="272.9" cy="68.3" rx="3.3" ry="2.1" transform="rotate(32 272.9 68.3)" fill="#3f7030" opacity="0.9"/>
<ellipse cx="330.5" cy="189.9" rx="3.6" ry="2.3" transform="rotate(79 330.5 189.9)" fill="#66984a" opacity="0.9"/>
<ellipse cx="140.1" cy="85.6" rx="3.5" ry="2.2" transform="rotate(10 140.1 85.6)" fill="#5f9440" opacity="0.9"/>
<ellipse cx="152.5" cy="166.1" rx="3.7" ry="2.4" transform="rotate(88 152.5 166.1)" fill="#78a84e" opacity="0.9"/>
<ellipse cx="175.2" cy="96.4" rx="3.5" ry="2.3" transform="rotate(64 175.2 96.4)" fill="#3e6a2e" opacity="0.9"/>
<ellipse cx="290.3" cy="46.9" rx="3.3" ry="2.2" transform="rotate(46 290.3 46.9)" fill="#88b858" opacity="0.9"/>
<ellipse cx="195.1" cy="145.3" rx="3.6" ry="2.4" transform="rotate(145 195.1 145.3)" fill="#a2c868" opacity="0.9"/>
<ellipse cx="356.9" cy="122.4" rx="1.9" ry="1.2" transform="rotate(68 356.9 122.4)" fill="#66984a" opacity="0.9"/>
<ellipse cx="311.5" cy="22.3" rx="2.5" ry="1.6" transform="rotate(74 311.5 22.3)" fill="#66984a" opacity="0.9"/>
<ellipse cx="169.5" cy="33.8" rx="1.6" ry="1.1" transform="rotate(177 169.5 33.8)" fill="#3f7030" opacity="0.9"/>
<ellipse cx="346.3" cy="186.3" rx="1.9" ry="1.2" transform="rotate(69 346.3 186.3)" fill="#66984a" opacity="0.9"/>
<ellipse cx="216.4" cy="120.5" rx="2.6" ry="1.7" transform="rotate(35 216.4 120.5)" fill="#66984a" opacity="0.9"/>
<ellipse cx="124.1" cy="136.4" rx="1.9" ry="1.2" transform="rotate(49 124.1 136.4)" fill="#78a84e" opacity="0.9"/>
<ellipse cx="183.2" cy="139.9" rx="4.0" ry="2.6" transform="rotate(103 183.2 139.9)" fill="#78a84e" opacity="0.9"/>
<ellipse cx="194.2" cy="3.1" rx="2.9" ry="1.9" transform="rotate(43 194.2 3.1)" fill="#5f9440" opacity="0.9"/>
<ellipse cx="205.0" cy="58.0" rx="3.5" ry="2.3" transform="rotate(72 205.0 58.0)" fill="#2f5526" opacity="0.9"/>
<ellipse cx="167.7" cy="138.0" rx="2.6" ry="1.7" transform="rotate(147 167.7 138.0)" fill="#a2c868" opacity="0.9"/>
<ellipse cx="208.9" cy="132.6" rx="2.9" ry="1.9" transform="rotate(113 208.9 132.6)" fill="#a2c868" opacity="0.9"/>
<ellipse cx="155.6" cy="18.8" rx="3.8" ry="2.5" transform="rotate(124 155.6 18.8)" fill="#88b858" opacity="0.9"/>
<ellipse cx="219.7" cy="27.5" rx="3.7" ry="2.4" transform="rotate(144 219.7 27.5)" fill="#88b858" opacity="0.9"/>
<ellipse cx="253.6" cy="51.1" rx="2.6" ry="1.7" transform="rotate(58 253.6 51.1)" fill="#88b858" opacity="0.9"/>
<ellipse cx="132.2" cy="37.0" rx="2.9" ry="1.9" transform="rotate(13 132.2 37.0)" fill="#3f7030" opacity="0.9"/>
<ellipse cx="149.8" cy="-0.6" rx="3.4" ry="2.2" transform="rotate(20 149.8 -0.6)" fill="#2f5526" opacity="0.9"/>
<ellipse cx="113.0" cy="63.2" rx="1.9" ry="1.3" transform="rotate(104 113.0 63.2)" fill="#c0da80" opacity="0.9"/>
<ellipse cx="232.6" cy="78.4" rx="3.5" ry="2.3" transform="rotate(142 232.6 78.4)" fill="#5f9440" opacity="0.9"/>
<ellipse cx="126.4" cy="104.8" rx="3.2" ry="2.1" transform="rotate(64 126.4 104.8)" fill="#2c4f25" opacity="0.9"/>
<ellipse cx="181.0" cy="180.1" rx="3.7" ry="2.4" transform="rotate(146 181.0 180.1)" fill="#3e6a2e" opacity="0.9"/>
<ellipse cx="319.6" cy="138.6" rx="2.0" ry="1.3" transform="rotate(43 319.6 138.6)" fill="#78a84e" opacity="0.9"/>
<ellipse cx="246.2" cy="128.9" rx="2.3" ry="1.5" transform="rotate(142 246.2 128.9)" fill="#78a84e" opacity="0.9"/>
<ellipse cx="189.2" cy="97.8" rx="1.6" ry="1.1" transform="rotate(16 189.2 97.8)" fill="#a2c868" opacity="0.9"/>
<ellipse cx="350.9" cy="0.1" rx="2.9" ry="1.9" transform="rotate(126 350.9 0.1)" fill="#a2c868" opacity="0.9"/>
<ellipse cx="211.4" cy="153.8" rx="3.6" ry="2.3" transform="rotate(123 211.4 153.8)" fill="#78a84e" opacity="0.9"/>
<ellipse cx="212.2" cy="134.8" rx="2.2" ry="1.4" transform="rotate(6 212.2 134.8)" fill="#2c4f25" opacity="0.9"/>
<ellipse cx="114.4" cy="25.3" rx="2.4" ry="1.5" transform="rotate(94 114.4 25.3)" fill="#2f5526" opacity="0.9"/>
<ellipse cx="238.0" cy="51.7" rx="4.0" ry="2.6" transform="rotate(163 238.0 51.7)" fill="#2f5526" opacity="0.9"/>
<ellipse cx="224.0" cy="58.6" rx="1.8" ry="1.1" transform="rotate(82 224.0 58.6)" fill="#2f5526" opacity="0.9"/>
<ellipse cx="260.0" cy="49.3" rx="2.1" ry="1.4" transform="rotate(54 260.0 49.3)" fill="#c0da80" opacity="0.9"/>
<ellipse cx="123.7" cy="23.4" rx="2.3" ry="1.5" transform="rotate(45 123.7 23.4)" fill="#c0da80" opacity="0.9"/>
<ellipse cx="198.5" cy="28.2" rx="2.5" ry="1.6" transform="rotate(110 198.5 28.2)" fill="#c0da80" opacity="0.9"/>
<ellipse cx="117.5" cy="75.5" rx="1.7" ry="1.1" transform="rotate(82 117.5 75.5)" fill="#a6cc6a" opacity="0.9"/>
<ellipse cx="348.7" cy="160.9" rx="3.4" ry="2.2" transform="rotate(44 348.7 160.9)" fill="#78a84e" opacity="0.9"/>
<ellipse cx="191.9" cy="144.3" rx="1.9" ry="1.2" transform="rotate(110 191.9 144.3)" fill="#5a8c3c" opacity="0.9"/>
<ellipse cx="229.9" cy="180.1" rx="2.8" ry="1.8" transform="rotate(45 229.9 180.1)" fill="#66984a" opacity="0.9"/>
<ellipse cx="314.3" cy="11.6" rx="2.5" ry="1.6" transform="rotate(46 314.3 11.6)" fill="#5a8c3c" opacity="0.9"/>
<ellipse cx="305.6" cy="99.9" rx="1.6" ry="1.1" transform="rotate(162 305.6 99.9)" fill="#66984a" opacity="0.9"/>
<ellipse cx="277.0" cy="174.7" rx="1.7" ry="1.1" transform="rotate(157 277.0 174.7)" fill="#2c4f25" opacity="0.9"/>
<ellipse cx="197.8" cy="83.3" rx="3.3" ry="2.2" transform="rotate(129 197.8 83.3)" fill="#5f9440" opacity="0.9"/>
<ellipse cx="353.4" cy="177.4" rx="1.9" ry="1.2" transform="rotate(176 353.4 177.4)" fill="#66984a" opacity="0.9"/>
<ellipse cx="297.3" cy="82.6" rx="2.7" ry="1.8" transform="rotate(128 297.3 82.6)" fill="#5f9440" opacity="0.9"/>
<ellipse cx="169.3" cy="114.5" rx="3.0" ry="1.9" transform="rotate(8 169.3 114.5)" fill="#2c4f25" opacity="0.9"/>
<ellipse cx="243.5" cy="85.6" rx="2.3" ry="1.5" transform="rotate(152 243.5 85.6)" fill="#a6cc6a" opacity="0.9"/>
<ellipse cx="125.6" cy="61.0" rx="2.9" ry="1.9" transform="rotate(65 125.6 61.0)" fill="#88b858" opacity="0.9"/>
<ellipse cx="295.8" cy="58.7" rx="3.4" ry="2.2" transform="rotate(102 295.8 58.7)" fill="#3f7030" opacity="0.9"/>
<ellipse cx="125.1" cy="185.8" rx="3.4" ry="2.2" transform="rotate(28 125.1 185.8)" fill="#3e6a2e" opacity="0.9"/>
<ellipse cx="170.3" cy="161.0" rx="3.2" ry="2.1" transform="rotate(29 170.3 161.0)" fill="#a2c868" opacity="0.9"/>
<ellipse cx="310.6" cy="97.3" rx="4.0" ry="2.6" transform="rotate(47 310.6 97.3)" fill="#78a84e" opacity="0.9"/>
<ellipse cx="328.7" cy="136.1" rx="2.2" ry="1.4" transform="rotate(116 328.7 136.1)" fill="#5a8c3c" opacity="0.9"/>
<ellipse cx="163.6" cy="0.8" rx="2.6" ry="1.7" transform="rotate(71 163.6 0.8)" fill="#5f9440" opacity="0.9"/>
<ellipse cx="351.5" cy="44.3" rx="1.9" ry="1.2" transform="rotate(125 351.5 44.3)" fill="#3e6a2e" opacity="0.9"/>
<ellipse cx="330.3" cy="12.0" rx="2.8" ry="1.8" transform="rotate(140 330.3 12.0)" fill="#78a84e" opacity="0.9"/>
<ellipse cx="354.2" cy="10.8" rx="3.9" ry="2.5" transform="rotate(45 354.2 10.8)" fill="#5a8c3c" opacity="0.9"/>
<ellipse cx="137.0" cy="5.1" rx="2.4" ry="1.6" transform="rotate(73 137.0 5.1)" fill="#c0da80" opacity="0.9"/>
<ellipse cx="141.2" cy="33.3" rx="2.5" ry="1.6" transform="rotate(157 141.2 33.3)" fill="#2f5526" opacity="0.9"/>
<ellipse cx="228.0" cy="92.9" rx="1.8" ry="1.2" transform="rotate(52 228.0 92.9)" fill="#66984a" opacity="0.9"/>
<ellipse cx="244.5" cy="59.4" rx="3.9" ry="2.5" transform="rotate(143 244.5 59.4)" fill="#c0da80" opacity="0.9"/>
<ellipse cx="278.4" cy="81.6" rx="1.6" ry="1.1" transform="rotate(179 278.4 81.6)" fill="#88b858" opacity="0.9"/>
<ellipse cx="190.5" cy="120.2" rx="2.3" ry="1.5" transform="rotate(53 190.5 120.2)" fill="#2c4f25" opacity="0.9"/>
<ellipse cx="285.0" cy="33.1" rx="1.9" ry="1.2" transform="rotate(148 285.0 33.1)" fill="#2f5526" opacity="0.9"/>
<ellipse cx="228.1" cy="23.0" rx="1.9" ry="1.2" transform="rotate(156 228.1 23.0)" fill="#88b858" opacity="0.9"/>
<ellipse cx="267.1" cy="57.6" rx="1.6" ry="1.1" transform="rotate(177 267.1 57.6)" fill="#a6cc6a" opacity="0.9"/>
<ellipse cx="163.2" cy="137.2" rx="3.7" ry="2.4" transform="rotate(51 163.2 137.2)" fill="#3e6a2e" opacity="0.9"/>
<ellipse cx="148.4" cy="120.5" rx="2.6" ry="1.7" transform="rotate(104 148.4 120.5)" fill="#2c4f25" opacity="0.9"/>
<ellipse cx="181.5" cy="24.0" rx="1.9" ry="1.2" transform="rotate(88 181.5 24.0)" fill="#a6cc6a" opacity="0.9"/>
<ellipse cx="239.9" cy="79.1" rx="2.8" ry="1.8" transform="rotate(72 239.9 79.1)" fill="#a6cc6a" opacity="0.9"/>
<ellipse cx="142.7" cy="168.1" rx="3.9" ry="2.5" transform="rotate(173 142.7 168.1)" fill="#78a84e" opacity="0.9"/>
<ellipse cx="273.4" cy="41.8" rx="2.7" ry="1.8" transform="rotate(105 273.4 41.8)" fill="#c0da80" opacity="0.9"/>
<ellipse cx="261.7" cy="85.0" rx="1.8" ry="1.1" transform="rotate(85 261.7 85.0)" fill="#5f9440" opacity="0.9"/>
<ellipse cx="182.0" cy="83.5" rx="3.9" ry="2.5" transform="rotate(169 182.0 83.5)" fill="#88b858" opacity="0.9"/>
<ellipse cx="285.0" cy="128.4" rx="2.2" ry="1.4" transform="rotate(95 285.0 128.4)" fill="#3e6a2e" opacity="0.9"/>
<ellipse cx="144.9" cy="171.7" rx="2.2" ry="1.4" transform="rotate(71 144.9 171.7)" fill="#3e6a2e" opacity="0.9"/>
<ellipse cx="197.1" cy="157.2" rx="3.6" ry="2.4" transform="rotate(26 197.1 157.2)" fill="#2c4f25" opacity="0.9"/>
<ellipse cx="247.9" cy="17.3" rx="3.8" ry="2.4" transform="rotate(93 247.9 17.3)" fill="#a6cc6a" opacity="0.9"/>
<ellipse cx="116.0" cy="3.9" rx="3.0" ry="2.0" transform="rotate(88 116.0 3.9)" fill="#2f5526" opacity="0.9"/>
<ellipse cx="358.5" cy="156.2" rx="3.7" ry="2.4" transform="rotate(162 358.5 156.2)" fill="#66984a" opacity="0.9"/>
<ellipse cx="150.8" cy="12.1" rx="2.0" ry="1.3" transform="rotate(80 150.8 12.1)" fill="#3f7030" opacity="0.9"/>
<ellipse cx="231.4" cy="124.5" rx="1.7" ry="1.1" transform="rotate(5 231.4 124.5)" fill="#a2c868" opacity="0.9"/>
<ellipse cx="359.2" cy="74.7" rx="3.6" ry="2.3" transform="rotate(138 359.2 74.7)" fill="#66984a" opacity="0.9"/>
<ellipse cx="286.6" cy="191.5" rx="1.8" ry="1.1" transform="rotate(167 286.6 191.5)" fill="#3e6a2e" opacity="0.9"/>
<ellipse cx="211.9" cy="125.3" rx="2.1" ry="1.4" transform="rotate(53 211.9 125.3)" fill="#2c4f25" opacity="0.9"/>
<ellipse cx="235.8" cy="159.1" rx="2.8" ry="1.8" transform="rotate(21 235.8 159.1)" fill="#78a84e" opacity="0.9"/>
<ellipse cx="112.9" cy="183.9" rx="3.3" ry="2.1" transform="rotate(64 112.9 183.9)" fill="#66984a" opacity="0.9"/>
<ellipse cx="277.2" cy="186.2" rx="2.7" ry="1.8" transform="rotate(110 277.2 186.2)" fill="#78a84e" opacity="0.9"/>
<ellipse cx="228.7" cy="1.1" rx="3.7" ry="2.4" transform="rotate(27 228.7 1.1)" fill="#a6cc6a" opacity="0.9"/>
<ellipse cx="199.4" cy="102.0" rx="2.9" ry="1.9" transform="rotate(24 199.4 102.0)" fill="#78a84e" opacity="0.9"/>
<ellipse cx="187.1" cy="96.4" rx="1.9" ry="1.2" transform="rotate(60 187.1 96.4)" fill="#2c4f25" opacity="0.9"/>
<ellipse cx="144.3" cy="15.1" rx="2.8" ry="1.8" transform="rotate(90 144.3 15.1)" fill="#88b858" opacity="0.9"/>
<ellipse cx="305.6" cy="45.9" rx="2.6" ry="1.7" transform="rotate(55 305.6 45.9)" fill="#78a84e" opacity="0.9"/>
<ellipse cx="258.6" cy="31.0" rx="1.9" ry="1.2" transform="rotate(26 258.6 31.0)" fill="#c0da80" opacity="0.9"/>
<ellipse cx="313.6" cy="95.7" rx="1.9" ry="1.3" transform="rotate(134 313.6 95.7)" fill="#2c4f25" opacity="0.9"/>
<ellipse cx="155.2" cy="117.9" rx="3.9" ry="2.5" transform="rotate(30 155.2 117.9)" fill="#66984a" opacity="0.9"/>
<ellipse cx="214.9" cy="0.1" rx="2.0" ry="1.3" transform="rotate(96 214.9 0.1)" fill="#a6cc6a" opacity="0.9"/>
<ellipse cx="151.0" cy="101.0" rx="1.7" ry="1.1" transform="rotate(126 151.0 101.0)" fill="#78a84e" opacity="0.9"/>
<ellipse cx="186.9" cy="185.4" rx="3.1" ry="2.0" transform="rotate(99 186.9 185.4)" fill="#78a84e" opacity="0.9"/>
<ellipse cx="215.6" cy="13.2" rx="2.2" ry="1.4" transform="rotate(168 215.6 13.2)" fill="#a6cc6a" opacity="0.9"/>
<ellipse cx="340.8" cy="61.8" rx="2.8" ry="1.8" transform="rotate(143 340.8 61.8)" fill="#66984a" opacity="0.9"/>
<ellipse cx="347.7" cy="108.2" rx="2.8" ry="1.8" transform="rotate(100 347.7 108.2)" fill="#78a84e" opacity="0.9"/>
<ellipse cx="267.8" cy="49.9" rx="3.0" ry="2.0" transform="rotate(94 267.8 49.9)" fill="#c0da80" opacity="0.9"/>
<ellipse cx="133.0" cy="151.6" rx="2.5" ry="1.6" transform="rotate(110 133.0 151.6)" fill="#66984a" opacity="0.9"/>
<ellipse cx="195.1" cy="20.7" rx="2.3" ry="1.5" transform="rotate(15 195.1 20.7)" fill="#3f7030" opacity="0.9"/>
<ellipse cx="152.7" cy="72.1" rx="2.4" ry="1.5" transform="rotate(172 152.7 72.1)" fill="#c0da80" opacity="0.9"/>
<ellipse cx="136.7" cy="70.2" rx="2.4" ry="1.5" transform="rotate(58 136.7 70.2)" fill="#5f9440" opacity="0.9"/>
<ellipse cx="241.4" cy="100.2" rx="3.4" ry="2.2" transform="rotate(104 241.4 100.2)" fill="#5a8c3c" opacity="0.9"/>
<ellipse cx="259.7" cy="18.4" rx="3.3" ry="2.1" transform="rotate(63 259.7 18.4)" fill="#88b858" opacity="0.9"/>
<ellipse cx="203.0" cy="114.0" rx="2.5" ry="1.6" transform="rotate(53 203.0 114.0)" fill="#5a8c3c" opacity="0.9"/>
<ellipse cx="263.7" cy="112.4" rx="2.4" ry="1.5" transform="rotate(30 263.7 112.4)" fill="#3e6a2e" opacity="0.9"/>
<ellipse cx="240.5" cy="144.2" rx="1.7" ry="1.1" transform="rotate(54 240.5 144.2)" fill="#78a84e" opacity="0.9"/>
<ellipse cx="174.7" cy="50.4" rx="3.5" ry="2.3" transform="rotate(165 174.7 50.4)" fill="#5f9440" opacity="0.9"/>
<ellipse cx="326.2" cy="76.0" rx="2.3" ry="1.5" transform="rotate(24 326.2 76.0)" fill="#66984a" opacity="0.9"/>
<ellipse cx="133.3" cy="188.9" rx="3.6" ry="2.3" transform="rotate(8 133.3 188.9)" fill="#5a8c3c" opacity="0.9"/>
<ellipse cx="191.0" cy="157.0" rx="3.5" ry="2.3" transform="rotate(72 191.0 157.0)" fill="#66984a" opacity="0.9"/>
<ellipse cx="126.1" cy="146.1" rx="1.7" ry="1.1" transform="rotate(21 126.1 146.1)" fill="#2c4f25" opacity="0.9"/>
<ellipse cx="249.5" cy="177.9" rx="3.1" ry="2.0" transform="rotate(157 249.5 177.9)" fill="#78a84e" opacity="0.9"/>
<ellipse cx="344.6" cy="144.0" rx="3.0" ry="1.9" transform="rotate(122 344.6 144.0)" fill="#78a84e" opacity="0.9"/>
<ellipse cx="216.2" cy="129.9" rx="4.0" ry="2.6" transform="rotate(44 216.2 129.9)" fill="#78a84e" opacity="0.9"/>
<ellipse cx="306.6" cy="83.5" rx="3.4" ry="2.2" transform="rotate(114 306.6 83.5)" fill="#3e6a2e" opacity="0.9"/>
<ellipse cx="280.6" cy="153.4" rx="2.7" ry="1.7" transform="rotate(18 280.6 153.4)" fill="#66984a" opacity="0.9"/>
<ellipse cx="320.0" cy="183.6" rx="2.5" ry="1.6" transform="rotate(28 320.0 183.6)" fill="#2c4f25" opacity="0.9"/>
<ellipse cx="287.0" cy="75.1" rx="3.3" ry="2.1" transform="rotate(143 287.0 75.1)" fill="#2f5526" opacity="0.9"/>
<ellipse cx="140.4" cy="166.4" rx="1.8" ry="1.2" transform="rotate(137 140.4 166.4)" fill="#5a8c3c" opacity="0.9"/>
<ellipse cx="146.9" cy="181.8" rx="2.0" ry="1.3" transform="rotate(120 146.9 181.8)" fill="#5a8c3c" opacity="0.9"/>
<ellipse cx="213.5" cy="171.9" rx="3.8" ry="2.5" transform="rotate(172 213.5 171.9)" fill="#a2c868" opacity="0.9"/>
<ellipse cx="287.0" cy="93.9" rx="2.6" ry="1.7" transform="rotate(130 287.0 93.9)" fill="#3e6a2e" opacity="0.9"/>
<ellipse cx="305.9" cy="18.4" rx="3.4" ry="2.2" transform="rotate(149 305.9 18.4)" fill="#a2c868" opacity="0.9"/>
<ellipse cx="192.7" cy="0.9" rx="3.6" ry="2.3" transform="rotate(89 192.7 0.9)" fill="#2f5526" opacity="0.9"/>
<ellipse cx="205.9" cy="153.8" rx="3.2" ry="2.1" transform="rotate(147 205.9 153.8)" fill="#3e6a2e" opacity="0.9"/>
<ellipse cx="258.6" cy="87.7" rx="3.5" ry="2.2" transform="rotate(123 258.6 87.7)" fill="#c0da80" opacity="0.9"/>
<ellipse cx="287.3" cy="74.9" rx="1.8" ry="1.2" transform="rotate(59 287.3 74.9)" fill="#5f9440" opacity="0.9"/>
<ellipse cx="269.5" cy="66.1" rx="2.6" ry="1.7" transform="rotate(65 269.5 66.1)" fill="#a6cc6a" opacity="0.9"/>
<ellipse cx="341.5" cy="153.7" rx="2.2" ry="1.4" transform="rotate(54 341.5 153.7)" fill="#a2c868" opacity="0.9"/>
<ellipse cx="219.7" cy="117.8" rx="2.9" ry="1.9" transform="rotate(135 219.7 117.8)" fill="#3e6a2e" opacity="0.9"/>
<ellipse cx="225.5" cy="92.4" rx="2.2" ry="1.4" transform="rotate(26 225.5 92.4)" fill="#2c4f25" opacity="0.9"/>
<ellipse cx="281.2" cy="95.1" rx="2.0" ry="1.3" transform="rotate(90 281.2 95.1)" fill="#66984a" opacity="0.9"/>
<ellipse cx="253.5" cy="105.0" rx="2.4" ry="1.6" transform="rotate(114 253.5 105.0)" fill="#a2c868" opacity="0.9"/>
<ellipse cx="348.8" cy="146.4" rx="3.5" ry="2.3" transform="rotate(63 348.8 146.4)" fill="#78a84e" opacity="0.9"/>
<ellipse cx="307.2" cy="40.4" rx="2.1" ry="1.4" transform="rotate(156 307.2 40.4)" fill="#2c4f25" opacity="0.9"/>
<ellipse cx="197.7" cy="29.6" rx="2.1" ry="1.3" transform="rotate(94 197.7 29.6)" fill="#c0da80" opacity="0.9"/>
<ellipse cx="283.6" cy="68.6" rx="3.9" ry="2.5" transform="rotate(74 283.6 68.6)" fill="#2f5526" opacity="0.9"/>
<ellipse cx="263.4" cy="159.2" rx="4.0" ry="2.6" transform="rotate(63 263.4 159.2)" fill="#78a84e" opacity="0.9"/>
<ellipse cx="201.1" cy="31.5" rx="3.7" ry="2.4" transform="rotate(75 201.1 31.5)" fill="#2f5526" opacity="0.9"/>
<ellipse cx="183.3" cy="106.8" rx="2.2" ry="1.4" transform="rotate(69 183.3 106.8)" fill="#78a84e" opacity="0.9"/>
<ellipse cx="119.2" cy="152.0" rx="3.9" ry="2.5" transform="rotate(99 119.2 152.0)" fill="#a2c868" opacity="0.9"/>
<ellipse cx="151.9" cy="164.8" rx="3.7" ry="2.4" transform="rotate(22 151.9 164.8)" fill="#2c4f25" opacity="0.9"/>
<ellipse cx="247.4" cy="140.4" rx="2.9" ry="1.9" transform="rotate(179 247.4 140.4)" fill="#66984a" opacity="0.9"/>
<ellipse cx="340.9" cy="148.4" rx="2.2" ry="1.4" transform="rotate(109 340.9 148.4)" fill="#78a84e" opacity="0.9"/>
<ellipse cx="345.2" cy="68.4" rx="3.5" ry="2.3" transform="rotate(123 345.2 68.4)" fill="#a2c868" opacity="0.9"/>
<ellipse cx="224.8" cy="69.9" rx="3.4" ry="2.2" transform="rotate(129 224.8 69.9)" fill="#2f5526" opacity="0.9"/>
<ellipse cx="179.4" cy="139.0" rx="3.7" ry="2.4" transform="rotate(140 179.4 139.0)" fill="#78a84e" opacity="0.9"/>
<ellipse cx="139.5" cy="180.5" rx="3.2" ry="2.1" transform="rotate(77 139.5 180.5)" fill="#78a84e" opacity="0.9"/>
<ellipse cx="336.5" cy="17.8" rx="3.0" ry="1.9" transform="rotate(49 336.5 17.8)" fill="#78a84e" opacity="0.9"/>
<ellipse cx="358.2" cy="58.0" rx="3.7" ry="2.4" transform="rotate(170 358.2 58.0)" fill="#78a84e" opacity="0.9"/>
<ellipse cx="277.5" cy="25.3" rx="2.6" ry="1.7" transform="rotate(175 277.5 25.3)" fill="#c0da80" opacity="0.9"/>
<ellipse cx="354.6" cy="187.1" rx="3.8" ry="2.5" transform="rotate(19 354.6 187.1)" fill="#2c4f25" opacity="0.9"/>
<ellipse cx="220.8" cy="129.8" rx="1.8" ry="1.2" transform="rotate(90 220.8 129.8)" fill="#66984a" opacity="0.9"/>
<ellipse cx="264.5" cy="177.5" rx="3.7" ry="2.4" transform="rotate(106 264.5 177.5)" fill="#78a84e" opacity="0.9"/>
<ellipse cx="146.7" cy="35.4" rx="3.3" ry="2.1" transform="rotate(142 146.7 35.4)" fill="#a6cc6a" opacity="0.9"/>
<ellipse cx="346.0" cy="172.3" rx="1.8" ry="1.2" transform="rotate(65 346.0 172.3)" fill="#5a8c3c" opacity="0.9"/>
<ellipse cx="195.6" cy="134.2" rx="3.9" ry="2.5" transform="rotate(39 195.6 134.2)" fill="#2c4f25" opacity="0.9"/>
<ellipse cx="325.8" cy="179.4" rx="1.6" ry="1.1" transform="rotate(151 325.8 179.4)" fill="#3e6a2e" opacity="0.9"/>
<ellipse cx="360.1" cy="108.9" rx="3.8" ry="2.4" transform="rotate(43 360.1 108.9)" fill="#5a8c3c" opacity="0.9"/>
<ellipse cx="133.5" cy="98.7" rx="3.9" ry="2.5" transform="rotate(27 133.5 98.7)" fill="#78a84e" opacity="0.9"/>
<ellipse cx="139.8" cy="166.6" rx="3.9" ry="2.5" transform="rotate(106 139.8 166.6)" fill="#78a84e" opacity="0.9"/>
<ellipse cx="120.0" cy="159.0" rx="3.3" ry="2.1" transform="rotate(148 120.0 159.0)" fill="#2c4f25" opacity="0.9"/>
<ellipse cx="302.9" cy="128.1" rx="1.8" ry="1.2" transform="rotate(17 302.9 128.1)" fill="#5a8c3c" opacity="0.9"/>
<ellipse cx="350.6" cy="39.9" rx="2.5" ry="1.7" transform="rotate(104 350.6 39.9)" fill="#a2c868" opacity="0.9"/>
<ellipse cx="199.3" cy="40.5" rx="2.5" ry="1.7" transform="rotate(67 199.3 40.5)" fill="#c0da80" opacity="0.9"/>
<ellipse cx="123.9" cy="69.7" rx="3.3" ry="2.2" transform="rotate(172 123.9 69.7)" fill="#3f7030" opacity="0.9"/>
<ellipse cx="199.6" cy="124.4" rx="3.8" ry="2.5" transform="rotate(44 199.6 124.4)" fill="#3e6a2e" opacity="0.9"/>
<ellipse cx="162.0" cy="39.0" rx="2.7" ry="1.7" transform="rotate(85 162.0 39.0)" fill="#c0da80" opacity="0.9"/>
<ellipse cx="158.0" cy="129.6" rx="3.1" ry="2.0" transform="rotate(133 158.0 129.6)" fill="#2c4f25" opacity="0.9"/>
<ellipse cx="255.0" cy="109.2" rx="1.7" ry="1.1" transform="rotate(59 255.0 109.2)" fill="#5a8c3c" opacity="0.9"/>
<ellipse cx="128.4" cy="96.9" rx="3.4" ry="2.2" transform="rotate(172 128.4 96.9)" fill="#a2c868" opacity="0.9"/>
<ellipse cx="120.6" cy="46.1" rx="1.8" ry="1.2" transform="rotate(128 120.6 46.1)" fill="#2f5526" opacity="0.9"/>
<ellipse cx="172.9" cy="40.3" rx="2.6" ry="1.7" transform="rotate(94 172.9 40.3)" fill="#c0da80" opacity="0.9"/>
<ellipse cx="278.8" cy="11.6" rx="1.8" ry="1.2" transform="rotate(34 278.8 11.6)" fill="#5f9440" opacity="0.9"/>
<ellipse cx="216.4" cy="128.1" rx="2.2" ry="1.4" transform="rotate(97 216.4 128.1)" fill="#a2c868" opacity="0.9"/>
<ellipse cx="337.8" cy="107.1" rx="3.9" ry="2.5" transform="rotate(121 337.8 107.1)" fill="#78a84e" opacity="0.9"/>
<ellipse cx="354.6" cy="174.9" rx="1.7" ry="1.1" transform="rotate(97 354.6 174.9)" fill="#78a84e" opacity="0.9"/>
<ellipse cx="349.6" cy="80.4" rx="2.0" ry="1.3" transform="rotate(52 349.6 80.4)" fill="#78a84e" opacity="0.9"/>
<ellipse cx="151.8" cy="93.6" rx="2.1" ry="1.4" transform="rotate(87 151.8 93.6)" fill="#5a8c3c" opacity="0.9"/>
<ellipse cx="146.5" cy="24.4" rx="3.5" ry="2.3" transform="rotate(10 146.5 24.4)" fill="#88b858" opacity="0.9"/>
<ellipse cx="160.0" cy="24.3" rx="3.2" ry="2.1" transform="rotate(171 160.0 24.3)" fill="#2f5526" opacity="0.9"/>
<ellipse cx="225.0" cy="70.2" rx="1.9" ry="1.2" transform="rotate(37 225.0 70.2)" fill="#88b858" opacity="0.9"/>
<ellipse cx="345.8" cy="11.9" rx="2.0" ry="1.3" transform="rotate(173 345.8 11.9)" fill="#5a8c3c" opacity="0.9"/>
<ellipse cx="124.3" cy="57.6" rx="2.0" ry="1.3" transform="rotate(70 124.3 57.6)" fill="#a6cc6a" opacity="0.9"/>
<ellipse cx="243.2" cy="102.8" rx="3.0" ry="1.9" transform="rotate(67 243.2 102.8)" fill="#2c4f25" opacity="0.9"/>
<ellipse cx="347.8" cy="13.8" rx="2.1" ry="1.4" transform="rotate(79 347.8 13.8)" fill="#78a84e" opacity="0.9"/>
<ellipse cx="354.9" cy="179.2" rx="3.2" ry="2.1" transform="rotate(41 354.9 179.2)" fill="#a2c868" opacity="0.9"/>
<ellipse cx="352.3" cy="121.8" rx="1.9" ry="1.2" transform="rotate(153 352.3 121.8)" fill="#3e6a2e" opacity="0.9"/>
<ellipse cx="226.5" cy="115.0" rx="3.6" ry="2.4" transform="rotate(9 226.5 115.0)" fill="#3e6a2e" opacity="0.9"/>
<ellipse cx="159.5" cy="181.1" rx="3.9" ry="2.6" transform="rotate(112 159.5 181.1)" fill="#78a84e" opacity="0.9"/>
<ellipse cx="301.9" cy="75.7" rx="1.7" ry="1.1" transform="rotate(11 301.9 75.7)" fill="#a2c868" opacity="0.9"/>
<ellipse cx="155.1" cy="140.9" rx="2.1" ry="1.4" transform="rotate(6 155.1 140.9)" fill="#78a84e" opacity="0.9"/>
<ellipse cx="166.7" cy="153.0" rx="2.8" ry="1.8" transform="rotate(16 166.7 153.0)" fill="#66984a" opacity="0.9"/>
<ellipse cx="227.8" cy="33.4" rx="1.6" ry="1.1" transform="rotate(10 227.8 33.4)" fill="#88b858" opacity="0.9"/>
<ellipse cx="195.8" cy="162.5" rx="2.9" ry="1.9" transform="rotate(121 195.8 162.5)" fill="#66984a" opacity="0.9"/>
<ellipse cx="174.4" cy="142.1" rx="2.0" ry="1.3" transform="rotate(148 174.4 142.1)" fill="#a2c868" opacity="0.9"/>
<ellipse cx="256.7" cy="78.9" rx="2.9" ry="1.9" transform="rotate(65 256.7 78.9)" fill="#5f9440" opacity="0.9"/>
<ellipse cx="194.8" cy="175.3" rx="2.2" ry="1.4" transform="rotate(168 194.8 175.3)" fill="#2c4f25" opacity="0.9"/>
<ellipse cx="152.5" cy="96.7" rx="4.0" ry="2.6" transform="rotate(43 152.5 96.7)" fill="#5a8c3c" opacity="0.9"/>
<ellipse cx="344.5" cy="58.8" rx="2.9" ry="1.9" transform="rotate(40 344.5 58.8)" fill="#3e6a2e" opacity="0.9"/>
<ellipse cx="286.8" cy="63.9" rx="3.1" ry="2.0" transform="rotate(175 286.8 63.9)" fill="#2f5526" opacity="0.9"/>
<ellipse cx="112.8" cy="91.0" rx="1.9" ry="1.2" transform="rotate(131 112.8 91.0)" fill="#66984a" opacity="0.9"/>
<ellipse cx="274.0" cy="131.0" rx="3.2" ry="2.1" transform="rotate(68 274.0 131.0)" fill="#3e6a2e" opacity="0.9"/>
<ellipse cx="235.9" cy="162.3" rx="3.0" ry="1.9" transform="rotate(23 235.9 162.3)" fill="#78a84e" opacity="0.9"/>
<ellipse cx="191.6" cy="122.0" rx="1.7" ry="1.1" transform="rotate(6 191.6 122.0)" fill="#a2c868" opacity="0.9"/>
<ellipse cx="181.8" cy="83.9" rx="1.8" ry="1.2" transform="rotate(60 181.8 83.9)" fill="#a6cc6a" opacity="0.9"/>
<ellipse cx="257.2" cy="75.3" rx="1.7" ry="1.1" transform="rotate(162 257.2 75.3)" fill="#c0da80" opacity="0.9"/>
<ellipse cx="237.5" cy="80.7" rx="2.9" ry="1.9" transform="rotate(125 237.5 80.7)" fill="#a6cc6a" opacity="0.9"/>
<ellipse cx="326.0" cy="27.4" rx="2.4" ry="1.5" transform="rotate(128 326.0 27.4)" fill="#66984a" opacity="0.9"/>
<ellipse cx="237.2" cy="177.7" rx="3.2" ry="2.0" transform="rotate(114 237.2 177.7)" fill="#66984a" opacity="0.9"/>
<ellipse cx="312.1" cy="187.9" rx="3.8" ry="2.5" transform="rotate(63 312.1 187.9)" fill="#66984a" opacity="0.9"/>
<ellipse cx="310.6" cy="136.1" rx="3.5" ry="2.3" transform="rotate(30 310.6 136.1)" fill="#a2c868" opacity="0.9"/>
<ellipse cx="314.9" cy="56.8" rx="2.2" ry="1.4" transform="rotate(131 314.9 56.8)" fill="#78a84e" opacity="0.9"/>
<ellipse cx="275.8" cy="89.4" rx="3.1" ry="2.0" transform="rotate(102 275.8 89.4)" fill="#2f5526" opacity="0.9"/>
<ellipse cx="344.2" cy="123.0" rx="1.8" ry="1.1" transform="rotate(40 344.2 123.0)" fill="#66984a" opacity="0.9"/>
<ellipse cx="139.2" cy="188.5" rx="3.7" ry="2.4" transform="rotate(65 139.2 188.5)" fill="#5a8c3c" opacity="0.9"/>
<ellipse cx="158.3" cy="132.7" rx="3.4" ry="2.2" transform="rotate(159 158.3 132.7)" fill="#66984a" opacity="0.9"/>
<ellipse cx="273.6" cy="143.3" rx="3.2" ry="2.1" transform="rotate(104 273.6 143.3)" fill="#3e6a2e" opacity="0.9"/>
<ellipse cx="303.4" cy="150.4" rx="3.7" ry="2.4" transform="rotate(67 303.4 150.4)" fill="#2c4f25" opacity="0.9"/>
<ellipse cx="346.9" cy="122.0" rx="2.8" ry="1.8" transform="rotate(90 346.9 122.0)" fill="#3e6a2e" opacity="0.9"/>
<ellipse cx="121.7" cy="169.4" rx="2.8" ry="1.8" transform="rotate(59 121.7 169.4)" fill="#a2c868" opacity="0.9"/>
<ellipse cx="274.8" cy="148.4" rx="3.3" ry="2.1" transform="rotate(110 274.8 148.4)" fill="#2c4f25" opacity="0.9"/>
<ellipse cx="190.7" cy="50.9" rx="2.0" ry="1.3" transform="rotate(68 190.7 50.9)" fill="#2f5526" opacity="0.9"/>
<ellipse cx="282.9" cy="180.8" rx="2.4" ry="1.6" transform="rotate(6 282.9 180.8)" fill="#78a84e" opacity="0.9"/>
<ellipse cx="184.3" cy="182.7" rx="3.1" ry="2.0" transform="rotate(14 184.3 182.7)" fill="#3e6a2e" opacity="0.9"/>
<ellipse cx="195.0" cy="52.2" rx="2.9" ry="1.9" transform="rotate(16 195.0 52.2)" fill="#5f9440" opacity="0.9"/>
<ellipse cx="120.8" cy="165.3" rx="2.9" ry="1.9" transform="rotate(134 120.8 165.3)" fill="#3e6a2e" opacity="0.9"/>
<ellipse cx="174.2" cy="36.7" rx="3.0" ry="1.9" transform="rotate(111 174.2 36.7)" fill="#c0da80" opacity="0.9"/>
<ellipse cx="193.5" cy="11.6" rx="1.7" ry="1.1" transform="rotate(75 193.5 11.6)" fill="#88b858" opacity="0.9"/>
<ellipse cx="243.2" cy="182.1" rx="3.1" ry="2.0" transform="rotate(55 243.2 182.1)" fill="#3e6a2e" opacity="0.9"/>
<ellipse cx="213.3" cy="43.7" rx="2.7" ry="1.8" transform="rotate(31 213.3 43.7)" fill="#a6cc6a" opacity="0.9"/>
<ellipse cx="218.9" cy="90.3" rx="2.6" ry="1.7" transform="rotate(142 218.9 90.3)" fill="#66984a" opacity="0.9"/>
<ellipse cx="313.4" cy="177.4" rx="2.8" ry="1.8" transform="rotate(150 313.4 177.4)" fill="#5a8c3c" opacity="0.9"/>
<ellipse cx="246.8" cy="191.5" rx="2.9" ry="1.9" transform="rotate(46 246.8 191.5)" fill="#a2c868" opacity="0.9"/>
<ellipse cx="302.8" cy="9.1" rx="2.0" ry="1.3" transform="rotate(69 302.8 9.1)" fill="#2c4f25" opacity="0.9"/>
<ellipse cx="308.0" cy="111.4" rx="3.8" ry="2.5" transform="rotate(165 308.0 111.4)" fill="#5a8c3c" opacity="0.9"/>
<ellipse cx="122.3" cy="9.2" rx="1.7" ry="1.1" transform="rotate(121 122.3 9.2)" fill="#a6cc6a" opacity="0.9"/>
<ellipse cx="160.3" cy="47.0" rx="3.8" ry="2.5" transform="rotate(18 160.3 47.0)" fill="#3f7030" opacity="0.9"/>
<ellipse cx="112.5" cy="88.2" rx="3.1" ry="2.0" transform="rotate(108 112.5 88.2)" fill="#c0da80" opacity="0.9"/>
<ellipse cx="236.1" cy="150.2" rx="2.2" ry="1.4" transform="rotate(61 236.1 150.2)" fill="#66984a" opacity="0.9"/>
<ellipse cx="281.6" cy="117.4" rx="1.7" ry="1.1" transform="rotate(144 281.6 117.4)" fill="#66984a" opacity="0.9"/>
<ellipse cx="144.0" cy="8.6" rx="2.7" ry="1.8" transform="rotate(98 144.0 8.6)" fill="#a6cc6a" opacity="0.9"/>
<ellipse cx="130.1" cy="73.9" rx="2.7" ry="1.8" transform="rotate(53 130.1 73.9)" fill="#a6cc6a" opacity="0.9"/>
<ellipse cx="349.5" cy="163.3" rx="2.8" ry="1.8" transform="rotate(80 349.5 163.3)" fill="#2c4f25" opacity="0.9"/>
<ellipse cx="342.6" cy="121.8" rx="2.4" ry="1.6" transform="rotate(56 342.6 121.8)" fill="#78a84e" opacity="0.9"/>
<ellipse cx="320.0" cy="137.9" rx="3.0" ry="1.9" transform="rotate(102 320.0 137.9)" fill="#66984a" opacity="0.9"/>
<ellipse cx="328.6" cy="35.2" rx="1.7" ry="1.1" transform="rotate(68 328.6 35.2)" fill="#78a84e" opacity="0.9"/>
<ellipse cx="223.6" cy="69.0" rx="2.6" ry="1.7" transform="rotate(111 223.6 69.0)" fill="#5f9440" opacity="0.9"/>
<ellipse cx="190.6" cy="119.0" rx="2.6" ry="1.7" transform="rotate(159 190.6 119.0)" fill="#5a8c3c" opacity="0.9"/>
<ellipse cx="304.4" cy="86.3" rx="2.7" ry="1.8" transform="rotate(116 304.4 86.3)" fill="#2c4f25" opacity="0.9"/>
<ellipse cx="276.2" cy="129.5" rx="2.8" ry="1.8" transform="rotate(171 276.2 129.5)" fill="#3e6a2e" opacity="0.9"/>
<ellipse cx="130.7" cy="42.0" rx="2.1" ry="1.4" transform="rotate(153 130.7 42.0)" fill="#3f7030" opacity="0.9"/>
<ellipse cx="275.3" cy="127.7" rx="2.6" ry="1.7" transform="rotate(76 275.3 127.7)" fill="#66984a" opacity="0.9"/>
<ellipse cx="168.3" cy="147.5" rx="2.9" ry="1.9" transform="rotate(87 168.3 147.5)" fill="#66984a" opacity="0.9"/>
<ellipse cx="252.3" cy="73.9" rx="3.6" ry="2.4" transform="rotate(109 252.3 73.9)" fill="#88b858" opacity="0.9"/>
<ellipse cx="176.6" cy="117.0" rx="2.1" ry="1.4" transform="rotate(76 176.6 117.0)" fill="#3e6a2e" opacity="0.9"/>
<ellipse cx="359.4" cy="36.1" rx="3.8" ry="2.5" transform="rotate(127 359.4 36.1)" fill="#78a84e" opacity="0.9"/>
<ellipse cx="257.2" cy="157.3" rx="3.6" ry="2.3" transform="rotate(17 257.2 157.3)" fill="#3e6a2e" opacity="0.9"/>
<ellipse cx="259.0" cy="136.2" rx="3.4" ry="2.2" transform="rotate(93 259.0 136.2)" fill="#66984a" opacity="0.9"/>
<ellipse cx="256.2" cy="46.8" rx="3.3" ry="2.1" transform="rotate(104 256.2 46.8)" fill="#3f7030" opacity="0.9"/>
<ellipse cx="247.5" cy="189.5" rx="1.9" ry="1.3" transform="rotate(83 247.5 189.5)" fill="#2c4f25" opacity="0.9"/>
<ellipse cx="313.6" cy="96.7" rx="1.7" ry="1.1" transform="rotate(87 313.6 96.7)" fill="#2c4f25" opacity="0.9"/>
<ellipse cx="243.5" cy="94.1" rx="2.0" ry="1.3" transform="rotate(126 243.5 94.1)" fill="#66984a" opacity="0.9"/>
<ellipse cx="277.2" cy="54.1" rx="3.5" ry="2.3" transform="rotate(173 277.2 54.1)" fill="#5f9440" opacity="0.9"/>
<ellipse cx="148.2" cy="115.5" rx="2.7" ry="1.8" transform="rotate(142 148.2 115.5)" fill="#2c4f25" opacity="0.9"/>
<ellipse cx="358.8" cy="108.5" rx="3.9" ry="2.5" transform="rotate(110 358.8 108.5)" fill="#5a8c3c" opacity="0.9"/>
<ellipse cx="301.0" cy="12.6" rx="2.3" ry="1.5" transform="rotate(43 301.0 12.6)" fill="#66984a" opacity="0.9"/>
<ellipse cx="283.9" cy="158.7" rx="2.5" ry="1.6" transform="rotate(37 283.9 158.7)" fill="#5a8c3c" opacity="0.9"/>
<ellipse cx="201.2" cy="102.2" rx="1.7" ry="1.1" transform="rotate(101 201.2 102.2)" fill="#5a8c3c" opacity="0.9"/>
<ellipse cx="275.7" cy="26.8" rx="2.3" ry="1.5" transform="rotate(63 275.7 26.8)" fill="#3f7030" opacity="0.9"/>
<ellipse cx="163.4" cy="2.9" rx="3.8" ry="2.5" transform="rotate(6 163.4 2.9)" fill="#2f5526" opacity="0.9"/>
<ellipse cx="296.0" cy="49.3" rx="2.8" ry="1.8" transform="rotate(149 296.0 49.3)" fill="#2f5526" opacity="0.9"/>
<ellipse cx="119.0" cy="156.9" rx="3.7" ry="2.4" transform="rotate(159 119.0 156.9)" fill="#a2c868" opacity="0.9"/>
<ellipse cx="287.2" cy="133.7" rx="2.4" ry="1.6" transform="rotate(121 287.2 133.7)" fill="#a2c868" opacity="0.9"/>
<ellipse cx="286.6" cy="3.4" rx="3.8" ry="2.5" transform="rotate(72 286.6 3.4)" fill="#3f7030" opacity="0.9"/>
<ellipse cx="263.7" cy="189.5" rx="2.1" ry="1.4" transform="rotate(154 263.7 189.5)" fill="#a2c868" opacity="0.9"/>
<ellipse cx="266.3" cy="27.1" rx="3.9" ry="2.5" transform="rotate(112 266.3 27.1)" fill="#88b858" opacity="0.9"/>
<ellipse cx="332.8" cy="32.1" rx="2.0" ry="1.3" transform="rotate(173 332.8 32.1)" fill="#2c4f25" opacity="0.9"/>
<ellipse cx="302.2" cy="89.8" rx="3.1" ry="2.0" transform="rotate(55 302.2 89.8)" fill="#5a8c3c" opacity="0.9"/>
<ellipse cx="303.7" cy="59.8" rx="3.6" ry="2.4" transform="rotate(93 303.7 59.8)" fill="#3e6a2e" opacity="0.9"/>
<ellipse cx="126.7" cy="93.6" rx="3.2" ry="2.1" transform="rotate(16 126.7 93.6)" fill="#66984a" opacity="0.9"/>
<ellipse cx="302.9" cy="130.0" rx="3.9" ry="2.5" transform="rotate(24 302.9 130.0)" fill="#78a84e" opacity="0.9"/>
<ellipse cx="192.7" cy="113.1" rx="3.4" ry="2.2" transform="rotate(153 192.7 113.1)" fill="#3e6a2e" opacity="0.9"/>
<ellipse cx="244.8" cy="73.0" rx="3.5" ry="2.3" transform="rotate(5 244.8 73.0)" fill="#5f9440" opacity="0.9"/>
<ellipse cx="338.3" cy="117.2" rx="2.9" ry="1.9" transform="rotate(170 338.3 117.2)" fill="#78a84e" opacity="0.9"/>
<ellipse cx="150.0" cy="129.7" rx="1.7" ry="1.1" transform="rotate(56 150.0 129.7)" fill="#5a8c3c" opacity="0.9"/>
<ellipse cx="251.8" cy="67.0" rx="2.5" ry="1.6" transform="rotate(74 251.8 67.0)" fill="#c0da80" opacity="0.9"/>
<ellipse cx="186.6" cy="0.9" rx="2.5" ry="1.6" transform="rotate(151 186.6 0.9)" fill="#5f9440" opacity="0.9"/>
<ellipse cx="154.9" cy="31.6" rx="2.0" ry="1.3" transform="rotate(120 154.9 31.6)" fill="#a6cc6a" opacity="0.9"/>
<ellipse cx="280.7" cy="34.8" rx="2.9" ry="1.9" transform="rotate(168 280.7 34.8)" fill="#3f7030" opacity="0.9"/>
<ellipse cx="222.6" cy="137.3" rx="2.2" ry="1.4" transform="rotate(92 222.6 137.3)" fill="#3e6a2e" opacity="0.9"/>
<ellipse cx="237.5" cy="88.9" rx="2.9" ry="1.9" transform="rotate(57 237.5 88.9)" fill="#3f7030" opacity="0.9"/>
<ellipse cx="183.0" cy="55.5" rx="2.5" ry="1.7" transform="rotate(10 183.0 55.5)" fill="#2f5526" opacity="0.9"/>
<ellipse cx="266.5" cy="53.4" rx="2.1" ry="1.3" transform="rotate(175 266.5 53.4)" fill="#3f7030" opacity="0.9"/>
<ellipse cx="227.2" cy="70.0" rx="3.9" ry="2.5" transform="rotate(101 227.2 70.0)" fill="#a6cc6a" opacity="0.9"/>
<ellipse cx="236.8" cy="42.0" rx="3.0" ry="1.9" transform="rotate(49 236.8 42.0)" fill="#2f5526" opacity="0.9"/>
<ellipse cx="130.5" cy="45.9" rx="3.9" ry="2.6" transform="rotate(109 130.5 45.9)" fill="#3f7030" opacity="0.9"/>
<ellipse cx="240.2" cy="58.1" rx="3.7" ry="2.4" transform="rotate(91 240.2 58.1)" fill="#3f7030" opacity="0.9"/>
<ellipse cx="358.6" cy="12.7" rx="4.0" ry="2.6" transform="rotate(37 358.6 12.7)" fill="#78a84e" opacity="0.9"/>
<ellipse cx="310.8" cy="136.7" rx="3.4" ry="2.2" transform="rotate(143 310.8 136.7)" fill="#3e6a2e" opacity="0.9"/>
<ellipse cx="358.4" cy="171.8" rx="3.0" ry="2.0" transform="rotate(151 358.4 171.8)" fill="#2c4f25" opacity="0.9"/>
<ellipse cx="125.9" cy="135.7" rx="1.8" ry="1.1" transform="rotate(62 125.9 135.7)" fill="#66984a" opacity="0.9"/>
<ellipse cx="279.9" cy="40.1" rx="2.7" ry="1.7" transform="rotate(86 279.9 40.1)" fill="#3f7030" opacity="0.9"/>
<ellipse cx="358.4" cy="176.8" rx="3.1" ry="2.0" transform="rotate(56 358.4 176.8)" fill="#78a84e" opacity="0.9"/>
<ellipse cx="291.7" cy="177.4" rx="3.0" ry="2.0" transform="rotate(79 291.7 177.4)" fill="#a2c868" opacity="0.9"/>
<ellipse cx="195.1" cy="183.8" rx="2.9" ry="1.9" transform="rotate(163 195.1 183.8)" fill="#78a84e" opacity="0.9"/>
<ellipse cx="157.8" cy="34.5" rx="3.5" ry="2.3" transform="rotate(42 157.8 34.5)" fill="#c0da80" opacity="0.9"/>
<ellipse cx="126.2" cy="4.6" rx="3.5" ry="2.3" transform="rotate(51 126.2 4.6)" fill="#c0da80" opacity="0.9"/>
<ellipse cx="270.0" cy="141.6" rx="3.7" ry="2.4" transform="rotate(82 270.0 141.6)" fill="#66984a" opacity="0.9"/>
<ellipse cx="312.4" cy="172.8" rx="3.4" ry="2.2" transform="rotate(162 312.4 172.8)" fill="#5a8c3c" opacity="0.9"/>
<ellipse cx="140.7" cy="-0.7" rx="3.2" ry="2.1" transform="rotate(77 140.7 -0.7)" fill="#3f7030" opacity="0.9"/>
<ellipse cx="207.3" cy="157.8" rx="2.2" ry="1.4" transform="rotate(165 207.3 157.8)" fill="#66984a" opacity="0.9"/>
<ellipse cx="158.1" cy="94.0" rx="3.9" ry="2.6" transform="rotate(151 158.1 94.0)" fill="#a2c868" opacity="0.9"/>
<ellipse cx="181.4" cy="176.0" rx="3.2" ry="2.1" transform="rotate(64 181.4 176.0)" fill="#78a84e" opacity="0.9"/>
<ellipse cx="158.4" cy="44.0" rx="2.3" ry="1.5" transform="rotate(179 158.4 44.0)" fill="#2f5526" opacity="0.9"/>
<ellipse cx="141.9" cy="120.9" rx="3.2" ry="2.1" transform="rotate(98 141.9 120.9)" fill="#66984a" opacity="0.9"/>
<ellipse cx="344.8" cy="60.1" rx="1.6" ry="1.1" transform="rotate(125 344.8 60.1)" fill="#3e6a2e" opacity="0.9"/>
<ellipse cx="258.5" cy="21.7" rx="2.2" ry="1.4" transform="rotate(7 258.5 21.7)" fill="#a6cc6a" opacity="0.9"/>
<ellipse cx="201.6" cy="116.2" rx="2.9" ry="1.9" transform="rotate(37 201.6 116.2)" fill="#3e6a2e" opacity="0.9"/>
<ellipse cx="346.8" cy="122.8" rx="3.1" ry="2.0" transform="rotate(128 346.8 122.8)" fill="#a2c868" opacity="0.9"/>
<ellipse cx="114.8" cy="125.7" rx="3.1" ry="2.0" transform="rotate(61 114.8 125.7)" fill="#66984a" opacity="0.9"/>
<ellipse cx="223.7" cy="92.0" rx="1.7" ry="1.1" transform="rotate(8 223.7 92.0)" fill="#2c4f25" opacity="0.9"/>
<ellipse cx="144.4" cy="72.4" rx="2.1" ry="1.4" transform="rotate(158 144.4 72.4)" fill="#5f9440" opacity="0.9"/>
<ellipse cx="205.5" cy="29.7" rx="2.5" ry="1.6" transform="rotate(89 205.5 29.7)" fill="#a6cc6a" opacity="0.9"/>
<ellipse cx="317.5" cy="26.7" rx="2.0" ry="1.3" transform="rotate(7 317.5 26.7)" fill="#78a84e" opacity="0.9"/>
<ellipse cx="172.1" cy="123.6" rx="1.9" ry="1.3" transform="rotate(11 172.1 123.6)" fill="#66984a" opacity="0.9"/>
<ellipse cx="146.5" cy="64.4" rx="4.0" ry="2.6" transform="rotate(151 146.5 64.4)" fill="#a6cc6a" opacity="0.9"/>
<ellipse cx="140.0" cy="53.6" rx="2.1" ry="1.3" transform="rotate(111 140.0 53.6)" fill="#a6cc6a" opacity="0.9"/>
<ellipse cx="161.9" cy="122.2" rx="2.0" ry="1.3" transform="rotate(137 161.9 122.2)" fill="#a2c868" opacity="0.9"/>
<ellipse cx="309.1" cy="77.5" rx="2.5" ry="1.6" transform="rotate(130 309.1 77.5)" fill="#66984a" opacity="0.9"/>
<ellipse cx="136.0" cy="-0.9" rx="2.3" ry="1.5" transform="rotate(7 136.0 -0.9)" fill="#3f7030" opacity="0.9"/>
<ellipse cx="160.2" cy="63.1" rx="1.6" ry="1.1" transform="rotate(100 160.2 63.1)" fill="#3f7030" opacity="0.9"/>
<ellipse cx="184.1" cy="53.5" rx="3.2" ry="2.1" transform="rotate(98 184.1 53.5)" fill="#c0da80" opacity="0.9"/>
<ellipse cx="311.2" cy="169.0" rx="3.8" ry="2.5" transform="rotate(167 311.2 169.0)" fill="#78a84e" opacity="0.9"/>
<ellipse cx="122.2" cy="53.2" rx="2.3" ry="1.5" transform="rotate(179 122.2 53.2)" fill="#a6cc6a" opacity="0.9"/>
<ellipse cx="294.6" cy="122.7" rx="3.1" ry="2.0" transform="rotate(64 294.6 122.7)" fill="#5a8c3c" opacity="0.9"/>
<ellipse cx="140.1" cy="188.1" rx="3.4" ry="2.2" transform="rotate(92 140.1 188.1)" fill="#66984a" opacity="0.9"/>
<ellipse cx="259.1" cy="129.3" rx="3.0" ry="1.9" transform="rotate(71 259.1 129.3)" fill="#2c4f25" opacity="0.9"/>
<ellipse cx="360.7" cy="160.8" rx="3.2" ry="2.1" transform="rotate(36 360.7 160.8)" fill="#2c4f25" opacity="0.9"/>
<ellipse cx="176.6" cy="94.4" rx="1.8" ry="1.2" transform="rotate(15 176.6 94.4)" fill="#66984a" opacity="0.9"/>
<ellipse cx="220.1" cy="110.3" rx="2.1" ry="1.4" transform="rotate(99 220.1 110.3)" fill="#2c4f25" opacity="0.9"/>
<ellipse cx="159.7" cy="84.8" rx="3.7" ry="2.4" transform="rotate(67 159.7 84.8)" fill="#a6cc6a" opacity="0.9"/>
<ellipse cx="158.6" cy="96.2" rx="3.1" ry="2.0" transform="rotate(67 158.6 96.2)" fill="#2c4f25" opacity="0.9"/>
<ellipse cx="161.5" cy="106.0" rx="2.4" ry="1.6" transform="rotate(29 161.5 106.0)" fill="#78a84e" opacity="0.9"/>
<ellipse cx="112.3" cy="-1.6" rx="2.4" ry="1.6" transform="rotate(120 112.3 -1.6)" fill="#88b858" opacity="0.9"/>
<ellipse cx="358.9" cy="121.7" rx="1.8" ry="1.1" transform="rotate(59 358.9 121.7)" fill="#66984a" opacity="0.9"/>
<ellipse cx="311.5" cy="32.5" rx="2.7" ry="1.8" transform="rotate(172 311.5 32.5)" fill="#3e6a2e" opacity="0.9"/>
<ellipse cx="216.8" cy="59.6" rx="2.6" ry="1.7" transform="rotate(118 216.8 59.6)" fill="#88b858" opacity="0.9"/>
<ellipse cx="246.1" cy="118.0" rx="3.8" ry="2.5" transform="rotate(51 246.1 118.0)" fill="#66984a" opacity="0.9"/>
<ellipse cx="143.3" cy="114.2" rx="3.2" ry="2.1" transform="rotate(105 143.3 114.2)" fill="#3e6a2e" opacity="0.9"/>
<ellipse cx="322.3" cy="103.8" rx="2.1" ry="1.3" transform="rotate(172 322.3 103.8)" fill="#66984a" opacity="0.9"/>
<ellipse cx="201.3" cy="123.4" rx="2.5" ry="1.6" transform="rotate(35 201.3 123.4)" fill="#78a84e" opacity="0.9"/>
<ellipse cx="226.4" cy="157.9" rx="3.2" ry="2.1" transform="rotate(116 226.4 157.9)" fill="#2c4f25" opacity="0.9"/>
<ellipse cx="325.2" cy="70.2" rx="1.9" ry="1.2" transform="rotate(165 325.2 70.2)" fill="#66984a" opacity="0.9"/>
<ellipse cx="118.4" cy="42.5" rx="1.7" ry="1.1" transform="rotate(16 118.4 42.5)" fill="#c0da80" opacity="0.9"/>
<ellipse cx="151.9" cy="65.6" rx="1.8" ry="1.2" transform="rotate(88 151.9 65.6)" fill="#2f5526" opacity="0.9"/>
<ellipse cx="340.7" cy="70.3" rx="3.2" ry="2.1" transform="rotate(109 340.7 70.3)" fill="#5a8c3c" opacity="0.9"/>
<ellipse cx="250.0" cy="110.9" rx="3.7" ry="2.4" transform="rotate(138 250.0 110.9)" fill="#66984a" opacity="0.9"/>
<ellipse cx="354.7" cy="53.7" rx="3.5" ry="2.2" transform="rotate(108 354.7 53.7)" fill="#66984a" opacity="0.9"/>
<ellipse cx="228.6" cy="0.1" rx="2.7" ry="1.8" transform="rotate(123 228.6 0.1)" fill="#88b858" opacity="0.9"/>
<ellipse cx="261.8" cy="96.8" rx="2.8" ry="1.8" transform="rotate(137 261.8 96.8)" fill="#78a84e" opacity="0.9"/>
<ellipse cx="144.8" cy="115.7" rx="3.2" ry="2.1" transform="rotate(74 144.8 115.7)" fill="#66984a" opacity="0.9"/>
<ellipse cx="130.4" cy="116.0" rx="2.6" ry="1.7" transform="rotate(100 130.4 116.0)" fill="#5a8c3c" opacity="0.9"/>
<ellipse cx="351.2" cy="131.0" rx="3.8" ry="2.5" transform="rotate(122 351.2 131.0)" fill="#66984a" opacity="0.9"/>
<ellipse cx="324.8" cy="13.7" rx="1.9" ry="1.2" transform="rotate(102 324.8 13.7)" fill="#66984a" opacity="0.9"/>
<ellipse cx="244.8" cy="184.7" rx="3.9" ry="2.5" transform="rotate(38 244.8 184.7)" fill="#3e6a2e" opacity="0.9"/>
<ellipse cx="253.6" cy="17.0" rx="2.2" ry="1.4" transform="rotate(113 253.6 17.0)" fill="#c0da80" opacity="0.9"/>
<ellipse cx="273.8" cy="58.3" rx="2.5" ry="1.6" transform="rotate(2 273.8 58.3)" fill="#c0da80" opacity="0.9"/>
<ellipse cx="112.8" cy="30.7" rx="1.9" ry="1.3" transform="rotate(34 112.8 30.7)" fill="#c0da80" opacity="0.9"/>
<ellipse cx="140.2" cy="168.2" rx="3.4" ry="2.2" transform="rotate(172 140.2 168.2)" fill="#2c4f25" opacity="0.9"/>
<ellipse cx="150.5" cy="62.6" rx="2.0" ry="1.3" transform="rotate(72 150.5 62.6)" fill="#a6cc6a" opacity="0.9"/>
<ellipse cx="344.9" cy="63.0" rx="1.9" ry="1.3" transform="rotate(27 344.9 63.0)" fill="#78a84e" opacity="0.9"/>
<ellipse cx="249.6" cy="187.3" rx="2.4" ry="1.6" transform="rotate(52 249.6 187.3)" fill="#3e6a2e" opacity="0.9"/>
<ellipse cx="318.3" cy="174.8" rx="2.0" ry="1.3" transform="rotate(77 318.3 174.8)" fill="#3e6a2e" opacity="0.9"/>
<ellipse cx="188.4" cy="79.1" rx="3.5" ry="2.2" transform="rotate(107 188.4 79.1)" fill="#a6cc6a" opacity="0.9"/>
<ellipse cx="342.0" cy="182.1" rx="3.1" ry="2.0" transform="rotate(15 342.0 182.1)" fill="#5a8c3c" opacity="0.9"/>
<ellipse cx="292.3" cy="173.3" rx="3.5" ry="2.3" transform="rotate(129 292.3 173.3)" fill="#78a84e" opacity="0.9"/>
<ellipse cx="171.4" cy="161.8" rx="2.8" ry="1.8" transform="rotate(72 171.4 161.8)" fill="#2c4f25" opacity="0.9"/>
<ellipse cx="174.0" cy="105.1" rx="2.4" ry="1.5" transform="rotate(152 174.0 105.1)" fill="#a2c868" opacity="0.9"/>
<ellipse cx="297.2" cy="145.3" rx="2.4" ry="1.6" transform="rotate(178 297.2 145.3)" fill="#3e6a2e" opacity="0.9"/>
<ellipse cx="345.3" cy="41.4" rx="1.8" ry="1.1" transform="rotate(24 345.3 41.4)" fill="#2c4f25" opacity="0.9"/>
<ellipse cx="169.5" cy="45.2" rx="2.6" ry="1.7" transform="rotate(124 169.5 45.2)" fill="#2f5526" opacity="0.9"/>
<ellipse cx="202.8" cy="69.6" rx="2.0" ry="1.3" transform="rotate(155 202.8 69.6)" fill="#3f7030" opacity="0.9"/>
<ellipse cx="173.7" cy="15.4" rx="2.8" ry="1.8" transform="rotate(156 173.7 15.4)" fill="#3f7030" opacity="0.9"/>
<ellipse cx="355.7" cy="159.0" rx="3.5" ry="2.3" transform="rotate(104 355.7 159.0)" fill="#3e6a2e" opacity="0.9"/>
<ellipse cx="170.9" cy="188.0" rx="3.8" ry="2.5" transform="rotate(31 170.9 188.0)" fill="#5a8c3c" opacity="0.9"/>
<ellipse cx="273.2" cy="66.4" rx="2.4" ry="1.6" transform="rotate(176 273.2 66.4)" fill="#88b858" opacity="0.9"/>
<ellipse cx="280.4" cy="161.7" rx="2.5" ry="1.6" transform="rotate(11 280.4 161.7)" fill="#66984a" opacity="0.9"/>
<ellipse cx="174.6" cy="59.2" rx="1.8" ry="1.2" transform="rotate(77 174.6 59.2)" fill="#c0da80" opacity="0.9"/>
<ellipse cx="259.3" cy="121.4" rx="3.3" ry="2.1" transform="rotate(135 259.3 121.4)" fill="#66984a" opacity="0.9"/>
<ellipse cx="334.1" cy="14.3" rx="2.2" ry="1.4" transform="rotate(57 334.1 14.3)" fill="#3e6a2e" opacity="0.9"/>
<ellipse cx="135.5" cy="11.1" rx="3.3" ry="2.1" transform="rotate(74 135.5 11.1)" fill="#c0da80" opacity="0.9"/>
<ellipse cx="344.2" cy="154.4" rx="2.3" ry="1.5" transform="rotate(7 344.2 154.4)" fill="#3e6a2e" opacity="0.9"/>
<ellipse cx="164.2" cy="108.5" rx="3.5" ry="2.3" transform="rotate(49 164.2 108.5)" fill="#3e6a2e" opacity="0.9"/>
<ellipse cx="115.0" cy="79.3" rx="1.8" ry="1.2" transform="rotate(154 115.0 79.3)" fill="#2f5526" opacity="0.9"/>
<ellipse cx="250.0" cy="45.0" rx="2.7" ry="1.8" transform="rotate(81 250.0 45.0)" fill="#5f9440" opacity="0.9"/>
<ellipse cx="191.3" cy="98.1" rx="2.7" ry="1.7" transform="rotate(34 191.3 98.1)" fill="#5a8c3c" opacity="0.9"/>
<ellipse cx="201.6" cy="177.0" rx="3.7" ry="2.4" transform="rotate(31 201.6 177.0)" fill="#2c4f25" opacity="0.9"/>
<ellipse cx="143.4" cy="154.7" rx="1.8" ry="1.2" transform="rotate(167 143.4 154.7)" fill="#2c4f25" opacity="0.9"/>
<ellipse cx="136.2" cy="16.0" rx="2.6" ry="1.7" transform="rotate(76 136.2 16.0)" fill="#c0da80" opacity="0.9"/>
<ellipse cx="359.0" cy="110.1" rx="3.8" ry="2.4" transform="rotate(116 359.0 110.1)" fill="#78a84e" opacity="0.9"/>
<ellipse cx="272.8" cy="89.8" rx="3.5" ry="2.3" transform="rotate(30 272.8 89.8)" fill="#2f5526" opacity="0.9"/>
<ellipse cx="151.3" cy="100.8" rx="2.6" ry="1.7" transform="rotate(176 151.3 100.8)" fill="#2c4f25" opacity="0.9"/>
<ellipse cx="263.4" cy="157.4" rx="3.4" ry="2.2" transform="rotate(23 263.4 157.4)" fill="#3e6a2e" opacity="0.9"/>
<ellipse cx="315.7" cy="142.6" rx="3.7" ry="2.4" transform="rotate(29 315.7 142.6)" fill="#5a8c3c" opacity="0.9"/>
<ellipse cx="221.3" cy="88.3" rx="3.0" ry="1.9" transform="rotate(160 221.3 88.3)" fill="#88b858" opacity="0.9"/>
<ellipse cx="305.9" cy="62.3" rx="3.6" ry="2.4" transform="rotate(0 305.9 62.3)" fill="#3e6a2e" opacity="0.9"/>
<ellipse cx="234.6" cy="71.4" rx="3.8" ry="2.5" transform="rotate(17 234.6 71.4)" fill="#c0da80" opacity="0.9"/>
<ellipse cx="198.7" cy="123.7" rx="3.2" ry="2.1" transform="rotate(46 198.7 123.7)" fill="#66984a" opacity="0.9"/>
<ellipse cx="214.9" cy="99.0" rx="2.1" ry="1.4" transform="rotate(10 214.9 99.0)" fill="#3e6a2e" opacity="0.9"/>
<ellipse cx="176.1" cy="129.1" rx="1.9" ry="1.2" transform="rotate(152 176.1 129.1)" fill="#a2c868" opacity="0.9"/>
<ellipse cx="161.2" cy="101.4" rx="3.0" ry="1.9" transform="rotate(54 161.2 101.4)" fill="#78a84e" opacity="0.9"/>
<ellipse cx="320.0" cy="71.7" rx="2.0" ry="1.3" transform="rotate(112 320.0 71.7)" fill="#66984a" opacity="0.9"/>
<ellipse cx="156.4" cy="144.7" rx="3.6" ry="2.3" transform="rotate(53 156.4 144.7)" fill="#2c4f25" opacity="0.9"/>
<ellipse cx="272.8" cy="68.9" rx="2.6" ry="1.7" transform="rotate(1 272.8 68.9)" fill="#a6cc6a" opacity="0.9"/>
<ellipse cx="230.0" cy="22.7" rx="2.4" ry="1.6" transform="rotate(72 230.0 22.7)" fill="#c0da80" opacity="0.9"/>
<ellipse cx="273.4" cy="137.7" rx="3.5" ry="2.3" transform="rotate(116 273.4 137.7)" fill="#3e6a2e" opacity="0.9"/>
<ellipse cx="118.8" cy="148.8" rx="3.5" ry="2.3" transform="rotate(175 118.8 148.8)" fill="#2c4f25" opacity="0.9"/>
<ellipse cx="348.9" cy="167.9" rx="3.9" ry="2.6" transform="rotate(37 348.9 167.9)" fill="#66984a" opacity="0.9"/>
<ellipse cx="150.4" cy="100.0" rx="3.0" ry="1.9" transform="rotate(140 150.4 100.0)" fill="#78a84e" opacity="0.9"/>
<ellipse cx="131.8" cy="80.6" rx="3.9" ry="2.5" transform="rotate(7 131.8 80.6)" fill="#88b858" opacity="0.9"/>
<ellipse cx="132.4" cy="41.4" rx="1.9" ry="1.2" transform="rotate(15 132.4 41.4)" fill="#c0da80" opacity="0.9"/>
<ellipse cx="259.0" cy="160.8" rx="2.5" ry="1.6" transform="rotate(47 259.0 160.8)" fill="#a2c868" opacity="0.9"/>
<ellipse cx="138.2" cy="0.9" rx="3.4" ry="2.2" transform="rotate(47 138.2 0.9)" fill="#c0da80" opacity="0.9"/>
<ellipse cx="292.3" cy="151.4" rx="1.8" ry="1.2" transform="rotate(96 292.3 151.4)" fill="#a2c868" opacity="0.9"/>
<ellipse cx="190.5" cy="147.2" rx="3.4" ry="2.2" transform="rotate(11 190.5 147.2)" fill="#5a8c3c" opacity="0.9"/>
<ellipse cx="224.5" cy="66.9" rx="2.7" ry="1.8" transform="rotate(16 224.5 66.9)" fill="#88b858" opacity="0.9"/>
<ellipse cx="341.1" cy="114.6" rx="3.9" ry="2.5" transform="rotate(43 341.1 114.6)" fill="#78a84e" opacity="0.9"/>
<ellipse cx="324.2" cy="61.8" rx="3.8" ry="2.5" transform="rotate(31 324.2 61.8)" fill="#a2c868" opacity="0.9"/>
<ellipse cx="226.3" cy="173.3" rx="1.8" ry="1.2" transform="rotate(174 226.3 173.3)" fill="#2c4f25" opacity="0.9"/>
<ellipse cx="191.4" cy="15.0" rx="2.6" ry="1.7" transform="rotate(8 191.4 15.0)" fill="#3f7030" opacity="0.9"/>
<ellipse cx="124.6" cy="53.4" rx="2.3" ry="1.5" transform="rotate(102 124.6 53.4)" fill="#5f9440" opacity="0.9"/>
<ellipse cx="346.7" cy="113.4" rx="3.6" ry="2.3" transform="rotate(105 346.7 113.4)" fill="#78a84e" opacity="0.9"/>
<ellipse cx="173.1" cy="139.9" rx="2.4" ry="1.6" transform="rotate(127 173.1 139.9)" fill="#a2c868" opacity="0.9"/>
<ellipse cx="127.7" cy="7.9" rx="2.6" ry="1.7" transform="rotate(74 127.7 7.9)" fill="#3f7030" opacity="0.9"/>
<ellipse cx="211.6" cy="107.6" rx="2.3" ry="1.5" transform="rotate(116 211.6 107.6)" fill="#78a84e" opacity="0.9"/>
</g>
<path d="M252 58 C256 55 262 57 264 63 C261 68 255 68 252 64 Z" fill="#8fa7d6" opacity="0.75"/>
<path d="M338 88 C345 85 354 86 361 90 L361 106 C353 105 344 101 338 95 Z" fill="#a9bce4" opacity="0.9"/>
<path d="M330 86 C338 84 352 88 356 100 L352 110 C344 106 334 100 330 92 Z" fill="#b4c4e8"/>
<path d="M248 44 C270 62 300 92 328 124" stroke="#454c4e" stroke-width="10" stroke-linecap="round" fill="none"/>
<path d="M248 44 C258 52 266 60 276 70" stroke="#454c4e" stroke-width="6" stroke-linecap="round" fill="none"/>
<path d="M324 56 C327 76 328 96 329 118" stroke="#4a5154" stroke-width="10" stroke-linecap="round" fill="none"/>
<path d="M342 72 C344 88 345 102 345 118" stroke="#4e5557" stroke-width="8" stroke-linecap="round" fill="none"/>
<path d="M264 128 C286 130 310 134 332 139" stroke="#3e4548" stroke-width="8" stroke-linecap="round" fill="none"/>
<path d="M276 156 C295 154.5 312 153 331 152" stroke="#4a5150" stroke-width="2.4" stroke-linecap="round" fill="none"/>
<path d="M321 116 C332 120 348 110 361 90 L361 203 L342 203 C338 185 333 165 329 150 C326 138 323 128 321 116 Z" fill="url(#trunk)"/>
<ellipse cx="338" cy="138" rx="6" ry="10" fill="#8f948c" opacity="0.6" filter="url(#bl2)"/>
<ellipse cx="314.2" cy="65.9" rx="2.7" ry="1.7" transform="rotate(96 314.2 65.9)" fill="#a6cc6a" opacity="0.9"/>
<ellipse cx="267.3" cy="40.6" rx="2.3" ry="1.5" transform="rotate(76 267.3 40.6)" fill="#6a9a48" opacity="0.9"/>
<ellipse cx="249.3" cy="38.6" rx="2.7" ry="1.7" transform="rotate(5 249.3 38.6)" fill="#a6cc6a" opacity="0.9"/>
<ellipse cx="277.8" cy="75.5" rx="2.8" ry="1.8" transform="rotate(6 277.8 75.5)" fill="#c0da80" opacity="0.9"/>
<ellipse cx="247.8" cy="105.9" rx="2.8" ry="1.8" transform="rotate(126 247.8 105.9)" fill="#a6cc6a" opacity="0.9"/>
<ellipse cx="275.9" cy="102.9" rx="2.7" ry="1.8" transform="rotate(178 275.9 102.9)" fill="#6a9a48" opacity="0.9"/>
<ellipse cx="314.2" cy="77.1" rx="2.8" ry="1.8" transform="rotate(148 314.2 77.1)" fill="#5a8c3c" opacity="0.9"/>
<ellipse cx="295.8" cy="124.0" rx="3.6" ry="2.4" transform="rotate(157 295.8 124.0)" fill="#5a8c3c" opacity="0.9"/>
<ellipse cx="305.4" cy="116.8" rx="1.7" ry="1.1" transform="rotate(121 305.4 116.8)" fill="#6a9a48" opacity="0.9"/>
<ellipse cx="279.5" cy="120.4" rx="2.0" ry="1.3" transform="rotate(144 279.5 120.4)" fill="#3e6a2e" opacity="0.9"/>
<ellipse cx="252.7" cy="103.1" rx="2.7" ry="1.7" transform="rotate(162 252.7 103.1)" fill="#3e6a2e" opacity="0.9"/>
<ellipse cx="331.1" cy="74.4" rx="2.3" ry="1.5" transform="rotate(96 331.1 74.4)" fill="#3e6a2e" opacity="0.9"/>
<ellipse cx="347.4" cy="72.4" rx="2.6" ry="1.7" transform="rotate(15 347.4 72.4)" fill="#5a8c3c" opacity="0.9"/>
<ellipse cx="344.4" cy="83.0" rx="1.7" ry="1.1" transform="rotate(122 344.4 83.0)" fill="#6a9a48" opacity="0.9"/>
<ellipse cx="275.2" cy="45.3" rx="3.5" ry="2.3" transform="rotate(118 275.2 45.3)" fill="#a6cc6a" opacity="0.9"/>
<ellipse cx="329.6" cy="47.2" rx="2.8" ry="1.8" transform="rotate(128 329.6 47.2)" fill="#a6cc6a" opacity="0.9"/>
<ellipse cx="257.1" cy="70.2" rx="2.7" ry="1.8" transform="rotate(134 257.1 70.2)" fill="#c0da80" opacity="0.9"/>
<ellipse cx="251.4" cy="63.7" rx="1.6" ry="1.1" transform="rotate(135 251.4 63.7)" fill="#6a9a48" opacity="0.9"/>
<ellipse cx="318.1" cy="53.6" rx="3.6" ry="2.3" transform="rotate(123 318.1 53.6)" fill="#5a8c3c" opacity="0.9"/>
<ellipse cx="317.6" cy="94.4" rx="2.2" ry="1.5" transform="rotate(167 317.6 94.4)" fill="#a6cc6a" opacity="0.9"/>
<ellipse cx="251.0" cy="119.0" rx="3.8" ry="2.5" transform="rotate(10 251.0 119.0)" fill="#6a9a48" opacity="0.9"/>
<ellipse cx="247.6" cy="46.5" rx="1.8" ry="1.2" transform="rotate(67 247.6 46.5)" fill="#5a8c3c" opacity="0.9"/>
<ellipse cx="247.9" cy="122.1" rx="3.7" ry="2.4" transform="rotate(148 247.9 122.1)" fill="#c0da80" opacity="0.9"/>
<ellipse cx="250.8" cy="67.3" rx="3.6" ry="2.3" transform="rotate(69 250.8 67.3)" fill="#5a8c3c" opacity="0.9"/>
<ellipse cx="305.9" cy="98.3" rx="3.2" ry="2.1" transform="rotate(34 305.9 98.3)" fill="#6a9a48" opacity="0.9"/>
<ellipse cx="265.9" cy="120.6" rx="2.0" ry="1.3" transform="rotate(29 265.9 120.6)" fill="#a6cc6a" opacity="0.9"/>
<ellipse cx="343.3" cy="110.9" rx="3.5" ry="2.3" transform="rotate(85 343.3 110.9)" fill="#5a8c3c" opacity="0.9"/>
<ellipse cx="314.9" cy="114.5" rx="3.7" ry="2.4" transform="rotate(15 314.9 114.5)" fill="#a6cc6a" opacity="0.9"/>
<ellipse cx="281.6" cy="81.6" rx="3.3" ry="2.1" transform="rotate(12 281.6 81.6)" fill="#5a8c3c" opacity="0.9"/>
<ellipse cx="350.9" cy="75.8" rx="3.1" ry="2.0" transform="rotate(170 350.9 75.8)" fill="#3e6a2e" opacity="0.9"/>
<ellipse cx="316.5" cy="68.7" rx="3.0" ry="2.0" transform="rotate(17 316.5 68.7)" fill="#c0da80" opacity="0.9"/>
<ellipse cx="319.9" cy="107.4" rx="2.6" ry="1.7" transform="rotate(52 319.9 107.4)" fill="#6a9a48" opacity="0.9"/>
<ellipse cx="288.3" cy="96.6" rx="2.8" ry="1.8" transform="rotate(27 288.3 96.6)" fill="#6a9a48" opacity="0.9"/>
<ellipse cx="236.4" cy="71.4" rx="2.1" ry="1.4" transform="rotate(58 236.4 71.4)" fill="#6a9a48" opacity="0.9"/>
<ellipse cx="261.7" cy="73.0" rx="3.1" ry="2.0" transform="rotate(34 261.7 73.0)" fill="#a6cc6a" opacity="0.9"/>
<ellipse cx="313.7" cy="98.9" rx="2.0" ry="1.3" transform="rotate(78 313.7 98.9)" fill="#5a8c3c" opacity="0.9"/>
<ellipse cx="256.3" cy="43.4" rx="3.0" ry="2.0" transform="rotate(89 256.3 43.4)" fill="#a6cc6a" opacity="0.9"/>
<ellipse cx="334.5" cy="84.9" rx="1.7" ry="1.1" transform="rotate(119 334.5 84.9)" fill="#5a8c3c" opacity="0.9"/>
<ellipse cx="292.2" cy="42.6" rx="3.6" ry="2.4" transform="rotate(118 292.2 42.6)" fill="#c0da80" opacity="0.9"/>
<ellipse cx="326.1" cy="89.5" rx="2.9" ry="1.9" transform="rotate(43 326.1 89.5)" fill="#5a8c3c" opacity="0.9"/>
<ellipse cx="278.4" cy="41.5" rx="3.0" ry="2.0" transform="rotate(82 278.4 41.5)" fill="#5a8c3c" opacity="0.9"/>
<ellipse cx="293.0" cy="79.1" rx="2.0" ry="1.3" transform="rotate(8 293.0 79.1)" fill="#5a8c3c" opacity="0.9"/>
<ellipse cx="350.9" cy="77.1" rx="3.6" ry="2.3" transform="rotate(101 350.9 77.1)" fill="#a6cc6a" opacity="0.9"/>
<ellipse cx="300.3" cy="117.7" rx="1.7" ry="1.1" transform="rotate(145 300.3 117.7)" fill="#c0da80" opacity="0.9"/>
<ellipse cx="272.7" cy="41.7" rx="3.5" ry="2.3" transform="rotate(147 272.7 41.7)" fill="#3e6a2e" opacity="0.9"/>
<ellipse cx="322.3" cy="102.2" rx="1.8" ry="1.2" transform="rotate(130 322.3 102.2)" fill="#c0da80" opacity="0.9"/>
<ellipse cx="277.4" cy="40.1" rx="3.0" ry="1.9" transform="rotate(175 277.4 40.1)" fill="#6a9a48" opacity="0.9"/>
<ellipse cx="302.9" cy="62.8" rx="2.3" ry="1.5" transform="rotate(134 302.9 62.8)" fill="#3e6a2e" opacity="0.9"/>
<ellipse cx="284.3" cy="97.2" rx="2.3" ry="1.5" transform="rotate(134 284.3 97.2)" fill="#5a8c3c" opacity="0.9"/>
<ellipse cx="266.9" cy="83.6" rx="1.7" ry="1.1" transform="rotate(89 266.9 83.6)" fill="#3e6a2e" opacity="0.9"/>
<ellipse cx="346.4" cy="105.1" rx="3.4" ry="2.2" transform="rotate(152 346.4 105.1)" fill="#6a9a48" opacity="0.9"/>
<ellipse cx="336.5" cy="102.0" rx="1.7" ry="1.1" transform="rotate(33 336.5 102.0)" fill="#6a9a48" opacity="0.9"/>
<ellipse cx="322.8" cy="110.8" rx="3.8" ry="2.5" transform="rotate(157 322.8 110.8)" fill="#6a9a48" opacity="0.9"/>
<ellipse cx="331.8" cy="45.7" rx="2.6" ry="1.7" transform="rotate(118 331.8 45.7)" fill="#6a9a48" opacity="0.9"/>
<ellipse cx="280.5" cy="63.8" rx="3.7" ry="2.4" transform="rotate(15 280.5 63.8)" fill="#c0da80" opacity="0.9"/>
<ellipse cx="280.6" cy="42.2" rx="3.1" ry="2.0" transform="rotate(66 280.6 42.2)" fill="#a6cc6a" opacity="0.9"/>
<ellipse cx="261.3" cy="62.9" rx="2.9" ry="1.9" transform="rotate(81 261.3 62.9)" fill="#5a8c3c" opacity="0.9"/>
<ellipse cx="342.9" cy="58.5" rx="3.4" ry="2.2" transform="rotate(22 342.9 58.5)" fill="#5a8c3c" opacity="0.9"/>
<ellipse cx="303.5" cy="42.7" rx="1.8" ry="1.2" transform="rotate(176 303.5 42.7)" fill="#6a9a48" opacity="0.9"/>
<ellipse cx="262.0" cy="100.2" rx="2.9" ry="1.9" transform="rotate(33 262.0 100.2)" fill="#a6cc6a" opacity="0.9"/>
<ellipse cx="334.0" cy="104.5" rx="3.2" ry="2.1" transform="rotate(114 334.0 104.5)" fill="#c0da80" opacity="0.9"/>
<ellipse cx="239.2" cy="98.3" rx="1.7" ry="1.1" transform="rotate(134 239.2 98.3)" fill="#a6cc6a" opacity="0.9"/>
<ellipse cx="343.3" cy="96.3" rx="1.9" ry="1.2" transform="rotate(45 343.3 96.3)" fill="#c0da80" opacity="0.9"/>
<ellipse cx="274.2" cy="104.7" rx="2.9" ry="1.9" transform="rotate(105 274.2 104.7)" fill="#5a8c3c" opacity="0.9"/>
<ellipse cx="297.0" cy="60.5" rx="2.2" ry="1.5" transform="rotate(75 297.0 60.5)" fill="#3e6a2e" opacity="0.9"/>
<ellipse cx="245.9" cy="71.2" rx="2.1" ry="1.3" transform="rotate(0 245.9 71.2)" fill="#a6cc6a" opacity="0.9"/>
<ellipse cx="347.8" cy="102.9" rx="3.8" ry="2.4" transform="rotate(150 347.8 102.9)" fill="#c0da80" opacity="0.9"/>
<ellipse cx="243.2" cy="50.5" rx="1.7" ry="1.1" transform="rotate(156 243.2 50.5)" fill="#3e6a2e" opacity="0.9"/>
<ellipse cx="308.2" cy="121.0" rx="2.3" ry="1.5" transform="rotate(59 308.2 121.0)" fill="#a6cc6a" opacity="0.9"/>
<ellipse cx="261.7" cy="49.1" rx="1.7" ry="1.1" transform="rotate(126 261.7 49.1)" fill="#5a8c3c" opacity="0.9"/>
<ellipse cx="284.7" cy="68.8" rx="3.7" ry="2.4" transform="rotate(80 284.7 68.8)" fill="#3e6a2e" opacity="0.9"/>
<ellipse cx="331.9" cy="83.4" rx="1.8" ry="1.2" transform="rotate(7 331.9 83.4)" fill="#3e6a2e" opacity="0.9"/>
<ellipse cx="306.7" cy="113.8" rx="1.7" ry="1.1" transform="rotate(179 306.7 113.8)" fill="#6a9a48" opacity="0.9"/>
<ellipse cx="263.0" cy="97.2" rx="3.4" ry="2.2" transform="rotate(51 263.0 97.2)" fill="#6a9a48" opacity="0.9"/>
<ellipse cx="270.3" cy="80.8" rx="2.7" ry="1.7" transform="rotate(27 270.3 80.8)" fill="#6a9a48" opacity="0.9"/>
<ellipse cx="298.8" cy="40.6" rx="2.4" ry="1.6" transform="rotate(55 298.8 40.6)" fill="#a6cc6a" opacity="0.9"/>
<ellipse cx="255.8" cy="96.8" rx="1.6" ry="1.0" transform="rotate(90 255.8 96.8)" fill="#a6cc6a" opacity="0.9"/>
<ellipse cx="336.6" cy="40.1" rx="3.7" ry="2.4" transform="rotate(61 336.6 40.1)" fill="#5a8c3c" opacity="0.9"/>
<ellipse cx="335.0" cy="56.1" rx="2.4" ry="1.6" transform="rotate(76 335.0 56.1)" fill="#a6cc6a" opacity="0.9"/>
<ellipse cx="250.5" cy="44.8" rx="3.2" ry="2.1" transform="rotate(112 250.5 44.8)" fill="#a6cc6a" opacity="0.9"/>
<ellipse cx="264.3" cy="71.0" rx="3.3" ry="2.2" transform="rotate(0 264.3 71.0)" fill="#5a8c3c" opacity="0.9"/>
<ellipse cx="300.3" cy="83.8" rx="3.2" ry="2.1" transform="rotate(36 300.3 83.8)" fill="#c0da80" opacity="0.9"/>
<ellipse cx="261.9" cy="53.7" rx="2.7" ry="1.7" transform="rotate(72 261.9 53.7)" fill="#6a9a48" opacity="0.9"/>
<ellipse cx="300.2" cy="44.0" rx="3.1" ry="2.0" transform="rotate(106 300.2 44.0)" fill="#a6cc6a" opacity="0.9"/>
<ellipse cx="297.3" cy="40.6" rx="3.0" ry="1.9" transform="rotate(118 297.3 40.6)" fill="#c0da80" opacity="0.9"/>
<ellipse cx="349.9" cy="57.0" rx="1.7" ry="1.1" transform="rotate(115 349.9 57.0)" fill="#5a8c3c" opacity="0.9"/>
<ellipse cx="260.2" cy="36.4" rx="1.9" ry="1.2" transform="rotate(21 260.2 36.4)" fill="#3e6a2e" opacity="0.9"/>
<ellipse cx="329.2" cy="89.9" rx="2.6" ry="1.7" transform="rotate(29 329.2 89.9)" fill="#a6cc6a" opacity="0.9"/>
<ellipse cx="251.9" cy="47.9" rx="2.9" ry="1.9" transform="rotate(164 251.9 47.9)" fill="#5a8c3c" opacity="0.9"/>
<ellipse cx="252" cy="48" rx="8" ry="6" fill="#5f8f40"/>
<ellipse cx="276" cy="62" rx="7" ry="5" fill="#5f8f40"/>
<ellipse cx="322" cy="56" rx="8" ry="6" fill="#5f8f40"/>
<ellipse cx="342" cy="72" rx="7" ry="5" fill="#5f8f40"/>
<circle cx="349.5" cy="32" r="3" fill="#a81d18"/>
<circle cx="358" cy="41.5" r="2.8" fill="#a81d18"/>
<circle cx="281.5" cy="113.5" r="2.8" fill="#a81d18"/>
<circle cx="238.5" cy="135.5" r="2.6" fill="#a81d18"/>
<circle cx="249" cy="136.5" r="2.6" fill="#a81d18"/>
<circle cx="323" cy="157" r="2.4" fill="#a81d18"/>
<circle cx="327" cy="156.5" r="2.2" fill="#a81d18"/>
<path d="M0 93.5 C8 95 16 98 23.5 101.2 C31 104 38 106 44 108.8 C50 111 54 113 56 117 C48 120 40 120 30 119 C20 117 10 114 0 113 Z" fill="#cfcdc2"/>
<path d="M63.3 113 C60 104 56.5 92 55.6 80.6 C55 72 58 64 60.7 60.1 C63 54 66 47 69.7 44.7 C73 43 78 45 81.2 48.6 C83 51 84 54 83.8 57.6 C82 68 79 77 77.4 85.8 C76 94 75 102 74.8 108.8 C76 112 78 114 80 116.5 Z" fill="#cfccc0"/>
<path d="M64.5 108.8 C62 98 60 88 60.7 78.1 C62 70 64 62 67.1 57.6 C70 54 74 53 77.4 53.7 C77 62 75 72 73.5 80.6 C72.5 90 72.2 100 72.2 108.8 Z" fill="#9f998f"/>
<path d="M0 121.7 C8 121 14 120.4 21 120.4 C30 120.5 38 121.5 46.6 121.7 C52 119 57 114 62 112.7 C68 112.5 74 115 80 116.5 C84 117 88 116.5 92 117 C97 117.5 100.5 119.1 101.7 124 L101.7 134.5 C105 139 109 144 113.3 149.9 C118 158 121.5 164 123.5 170.4 C126 178 128.5 187 130 196 L131.2 203 L0 203 Z" fill="url(#fur)"/>
<path d="M85 120 C93 119 100 121 101.7 126 L101.7 134.5 C97 130 90 125 85 120 Z" fill="#bcb8ab"/>
</svg></div>
<div class="a" style="left:480.1px;top:172.9px;width:46.6px;height:27px;background:#dc3d50;border-radius:4px;"></div>
<svg class="a" style="left:800px;top:108px;" width="30" height="24" viewBox="800 108 30 24"><path d="M808.6 117.7 L814 122.3 L819.4 117.7" stroke="#e4e6eb" stroke-width="2.7" fill="none" stroke-linecap="round" stroke-linejoin="round"/></svg>
<div class="a" style="left:466.7px;top:380px;width:361.3px;height:57.5px;background:transparent;border-radius:8px;border:1px solid #3e4042;box-sizing:border-box;"></div>
<svg class="a" style="left:790px;top:399px;" width="20" height="20" viewBox="790 399 20 20"><path d="M800.8 402.6 H805.6 V407.4 M805.4 402.8 L800.9 407.3 M793.3 410.3 V415.1 H798.1 M793.5 414.9 L798 410.4" stroke="#b0b3b8" stroke-width="1.6" fill="none" stroke-linecap="round"/></svg>
<svg class="a" style="left:474px;top:463px;" width="45" height="45" viewBox="474 463 45 45"><circle cx="496.4" cy="485.4" r="20.5" fill="#3a3b3c"/><rect x="485.9" y="472.9" width="21.1" height="25.6" rx="2.2" fill="none" stroke="#e4e6eb" stroke-width="1.6"/><path d="M490.2 481.6 L494.2 485.2 L502.2 476.8" stroke="#e4e6eb" stroke-width="1.6" fill="none" stroke-linecap="round" stroke-linejoin="round"/><circle cx="490.4" cy="489.4" r="1" fill="#e4e6eb"/><circle cx="490.4" cy="493.4" r="1" fill="#e4e6eb"/><path d="M493.6 489.4 H503 M493.6 493.4 H500" stroke="#e4e6eb" stroke-width="1.5" stroke-linecap="round"/></svg>
<div class="a" style="left:448px;top:559px;width:398.4px;height:300px;background:#242526;border-radius:9px;box-shadow:0 0 1px 0.5px rgba(0,0,0,0.16);"></div>
<svg class="a" style="left:745px;top:580px;" width="85" height="22" viewBox="745 580 85 22"><circle cx="756.8" cy="591" r="2.3" fill="#e4e6eb"/><circle cx="763.8" cy="591" r="2.3" fill="#e4e6eb"/><circle cx="770.8" cy="591" r="2.3" fill="#e4e6eb"/><path d="M808.6 588.7 L814 593.3 L819.4 588.7" stroke="#e4e6eb" stroke-width="2.7" fill="none" stroke-linecap="round" stroke-linejoin="round"/></svg>
<svg class="a" style="left:485px;top:620px;" width="30" height="200" viewBox="485 620 30 200"><circle cx="500.8" cy="636.5" r="11.3" fill="#18191a"/><path d="M493.6 636.6 Q500.8 627.6 508 636.6 Q500.8 645.6 493.6 636.6 Z" fill="#b0b3b8"/><circle cx="500.8" cy="636.6" r="3.3" fill="#18191a"/><circle cx="500.8" cy="636.6" r="1.9" fill="#b0b3b8"/><circle cx="500.7" cy="691.5" r="11.5" fill="#5cb85c"/><path d="M497.8 686 H503.6 C505.6 686 507 687.4 507 689.4 V691.6 C507 693.6 505.6 695 503.6 695 H500.2 L497 698.6 V695 C495.2 694.7 494.4 693.5 494.4 691.6 V689.4 C494.4 687.4 495.8 686 497.8 686 Z" fill="#fff"/><circle cx="500.7" cy="746.4" r="11.5" fill="#3578e5"/><rect x="494.4" y="744.6" width="2.8" height="7.2" rx="0.6" fill="#fff"/><path d="M498.3 744.6 L501.2 740.2 C502 738.8 504 739.2 503.7 741.1 L503.2 743.6 H506.6 C507.8 743.6 508.5 744.6 508.2 745.7 L507 750.6 C506.8 751.4 506.1 751.9 505.3 751.9 H498.3 Z" fill="#fff"/><circle cx="500.7" cy="801.4" r="11.5" fill="#3578e5"/><path d="M501.2 795.6 L507.6 801.4 L501.2 807.2 V804 C498.4 804 496.2 805.3 494.9 807.5 C495.3 803.1 497.7 799.6 501.2 798.8 Z" fill="#fff"/></svg>
<div class="a" style="left:865px;top:88px;width:397.2px;height:641.6px;background:#242526;border-radius:9px;box-shadow:0 0 1px 0.5px rgba(0,0,0,0.16);"></div>
<svg class="a" style="left:1160px;top:105px;" width="90" height="25" viewBox="1160 105 90 25"><circle cx="1173.3" cy="119.8" r="2.3" fill="#e4e6eb"/><circle cx="1180.3" cy="119.8" r="2.3" fill="#e4e6eb"/><circle cx="1187.3" cy="119.8" r="2.3" fill="#e4e6eb"/><path d="M1225.1 117.7 L1230.5 122.3 L1235.9 117.7" stroke="#e4e6eb" stroke-width="2.7" fill="none" stroke-linecap="round" stroke-linejoin="round"/></svg>
<div class="a" style="left:878.3px;top:230px;width:370.8px;height:41px;background:#3a3b3c;border-radius:6px;"></div>
<div class="a" style="left:878px;top:318.7px;width:329.7px;height:46.3px;background:#3a3b3c;border-radius:23.2px;"></div>
<div class="a" style="left:878px;top:374px;width:329.7px;height:45.7px;background:#3a3b3c;border-radius:22.9px;"></div>
<svg class="a" style="left:1170px;top:330px;" width="75" height="82" viewBox="1170 330 75 82"><circle cx="1184.9" cy="342.5" r="8.7" fill="none" stroke="#b0b3b8" stroke-width="1.3"/><path d="M1181 342.7 L1183.7 345.2 L1188.9 339.9" stroke="#b0b3b8" stroke-width="1.3" fill="none" stroke-linecap="round" stroke-linejoin="round"/><circle cx="1184.9" cy="397.4" r="8.7" fill="none" stroke="#b0b3b8" stroke-width="1.3"/><path d="M1181 397.59999999999997 L1183.7 400.09999999999997 L1188.9 394.79999999999995" stroke="#b0b3b8" stroke-width="1.3" fill="none" stroke-linecap="round" stroke-linejoin="round"/><g fill="#737578"><rect x="1227.6" y="332.8" width="6.2" height="3.2" rx="1.4"/><rect x="1222.4" y="335.40000000000003" width="16.5" height="1.9" rx="0.9"/><path d="M1223.8 338.1 H1237.5 L1236.3 350.40000000000003 C1236.2 351.40000000000003 1235.5 352.0 1234.5 352.0 H1226.8 C1225.8 352.0 1225.1 351.40000000000003 1225 350.40000000000003 Z"/></g><path d="M1228.3 340.3 V349.6 M1233 340.3 V349.6" stroke="#242526" stroke-width="1.1"/><g fill="#737578"><rect x="1227.6" y="387.9" width="6.2" height="3.2" rx="1.4"/><rect x="1222.4" y="390.5" width="16.5" height="1.9" rx="0.9"/><path d="M1223.8 393.2 H1237.5 L1236.3 405.5 C1236.2 406.5 1235.5 407.09999999999997 1234.5 407.09999999999997 H1226.8 C1225.8 407.09999999999997 1225.1 406.5 1225 405.5 Z"/></g><path d="M1228.3 395.4 V404.7 M1233 395.4 V404.7" stroke="#242526" stroke-width="1.1"/></svg>
<div class="a" style="left:878px;top:429.4px;width:329.7px;height:45.7px;background:transparent;border-radius:23px;border:2px dotted #4a8bf0;box-sizing:border-box;"></div>
<div class="a" style="left:878px;top:503px;width:181px;height:41.5px;background:#505152;border-radius:6px;"></div>
<div class="a" style="left:1068.1px;top:503px;width:180.4px;height:41.5px;background:#505152;border-radius:6px;"></div>
<div class="a" style="left:882.9px;top:665.7px;width:361.4px;height:41px;background:#273850;border-radius:6px;"></div>
<div class="a" style="left:865px;top:746px;width:397.2px;height:120px;background:#242526;border-radius:9px;box-shadow:0 0 1px 0.5px rgba(0,0,0,0.16);"></div>
<svg class="a" style="left:1160px;top:765px;" width="90" height="25" viewBox="1160 765 90 25"><circle cx="1173.3" cy="777.7" r="2.3" fill="#e4e6eb"/><circle cx="1180.3" cy="777.7" r="2.3" fill="#e4e6eb"/><circle cx="1187.3" cy="777.7" r="2.3" fill="#e4e6eb"/><path d="M1225.1 775.7 L1230.5 780.3 L1235.9 775.7" stroke="#e4e6eb" stroke-width="2.7" fill="none" stroke-linecap="round" stroke-linejoin="round"/></svg>
<svg class="a" style="left:890px;top:810px;" width="350" height="8" viewBox="890 810 350 8"><circle cx="905.7" cy="824" r="8.5" fill="#e4e6eb"/><rect x="952" y="816" width="278" height="10" rx="4" fill="#3a3b3c"/></svg>
<div class="a" style="left:1301px;top:7.5px;width:299px;height:811px;background:#242526;border-radius:0px;box-shadow:0 0 1px 0.5px rgba(0,0,0,0.16);"></div>
<div class="a" style="left:1327px;top:79.3px;width:400px;height:120px;background:#303133;border-radius:8px;"></div>
<svg class="a" style="left:1500px;top:95px;" width="30" height="28" viewBox="1500 95 30 28"><path d="M1513.5 103.8 H1522.5 C1524.5 103.8 1526 105.3 1526 107.3 V111.8 C1526 113.6 1524.8 114.9 1523.2 115.2 L1523.6 120 L1518.8 115.3 H1513.5 C1511.5 115.3 1510 113.8 1510 111.8 V107.3 C1510 105.3 1511.5 103.8 1513.5 103.8 Z" fill="#b0b3b8"/><path d="M1506.3 97.7 H1517 C1519.2 97.7 1520.8 99.3 1520.8 101.5 V107.8 C1520.8 110 1519.2 111.6 1517 111.6 H1511.5 L1506.3 116.6 V111.5 C1504.1 111.3 1502.5 109.8 1502.5 107.6 V101.5 C1502.5 99.3 1504.1 97.7 1506.3 97.7 Z" fill="#b0b3b8" stroke="#303133" stroke-width="1.4"/></svg>
<div class="a" style="left:1365.6px;top:733px;width:300px;height:41.4px;background:#3a3b3c;border-radius:20.7px;"></div>
<svg class="a" style="left:1318px;top:732px;" width="46" height="46" viewBox="1318 732 46 46"><circle cx="1340.5" cy="753.8" r="18.4" fill="#f8f8f8"/><path d="M1329.56 740.87 C1325.58 745.84 1325.08 752.81 1328.07 757.28 C1331.05 761.26 1335.53 763.25 1338.51 764.74 L1340.40 770.21 C1341.49 765.74 1345.47 761.26 1350.45 759.37 C1345.47 760.76 1342.49 761.26 1339.51 760.76 C1335.53 759.27 1332.54 756.29 1332.74 752.81 C1332.94 749.82 1334.53 747.83 1336.52 745.84 Z" fill="#969696"/><path d="M1328.37 739.38 C1336.52 733.91 1350.45 734.90 1356.41 742.86 C1353.43 746.34 1346.47 746.64 1341.49 745.84 C1338.51 745.35 1336.52 745.35 1335.53 746.34 C1332.54 743.85 1330.55 741.86 1328.37 739.38 Z" fill="#555555"/><ellipse cx="1346.47" cy="740.87" rx="2.49" ry="0.99" fill="#e0e0e0"/><circle cx="1353.3" cy="766.3" r="6.9" fill="#3a3b3c" stroke="#242526" stroke-width="1"/><path d="M1350.2 765.2 L1353.3 768.0 L1356.3999999999999 765.2" stroke="#e4e6eb" stroke-width="1.6" fill="none" stroke-linecap="round" stroke-linejoin="round"/></svg>
<div class="a" style="left:0;top:0;width:1600px;height:818px;will-change:transform">
<div class="t" id="t_live" style="left:8.30px;top:29.00px;font-size:28px;line-height:28px;color:#e4e6eb;-webkit-text-stroke:1.05px #e4e6eb;letter-spacing:0.392px;">Live dashboard</div>
<div class="t" id="t_d1" style="left:9.10px;top:73.00px;font-size:19.5px;line-height:19.5px;color:#b0b3b8;letter-spacing:0.487px;">Now that you're live you can see your</div>
<div class="t" id="t_d2" style="left:9.10px;top:95.00px;font-size:19.5px;line-height:19.5px;color:#b0b3b8;letter-spacing:0.632px;">real-time insights or add tools to</div>
<div class="t" id="t_d3" style="left:9.10px;top:118.00px;font-size:19.5px;line-height:19.5px;color:#b0b3b8;letter-spacing:0.611px;">increase distribution or engagement.</div>
<div class="t" id="t_hv" style="left:64.00px;top:156.00px;font-size:17px;line-height:17px;color:#e4e6eb;-webkit-text-stroke:0.45px #e4e6eb;letter-spacing:0.853px;">Haivision Apac Haivision Apac</div>
<div class="t" id="t_isl" style="left:322.60px;top:156.00px;font-size:17px;line-height:17px;color:#b0b3b8;letter-spacing:0.491px;">is live</div>
<div class="t" id="t_now" style="left:64.00px;top:179.00px;font-size:17px;line-height:17px;color:#b0b3b8;letter-spacing:0.451px;">now.</div>
<div class="t" id="t_just" style="left:65.00px;top:201.00px;font-size:15.5px;line-height:15.5px;color:#b0b3b8;">Just now ·</div>
<div class="t" id="t_dash" style="left:64.00px;top:277.00px;font-size:20.5px;line-height:20.5px;color:#e4e6eb;-webkit-text-stroke:0.55px #e4e6eb;letter-spacing:0.377px;">Dashboard</div>
<div class="t" id="t_set" style="left:64.90px;top:337.00px;font-size:20.5px;line-height:20.5px;color:#e4e6eb;-webkit-text-stroke:0.55px #e4e6eb;letter-spacing:0.625px;">Settings</div>
<div class="t" id="t_int" style="left:63.90px;top:396.00px;font-size:20.5px;line-height:20.5px;color:#e4e6eb;-webkit-text-stroke:0.55px #e4e6eb;letter-spacing:0.865px;">Interactivity</div>
<div class="t" id="t_dis" style="left:63.90px;top:455.00px;font-size:20.5px;line-height:20.5px;color:#e4e6eb;-webkit-text-stroke:0.55px #e4e6eb;letter-spacing:0.887px;">Distribution</div>
<div class="t" id="t_time" style="left:42.20px;top:725.00px;font-size:23.5px;line-height:23.5px;color:#b0b3b8;-webkit-text-stroke:0.55px #b0b3b8;letter-spacing:1.485px;">00:00:34</div>
<div class="t" id="t_end" style="left:138.00px;top:774.00px;font-size:18px;line-height:18px;color:#ffffff;-webkit-text-stroke:0.55px #ffffff;letter-spacing:0.303px;">End live video</div>
<div class="t" id="t_video" style="left:467.10px;top:109.00px;font-size:21px;line-height:21px;color:#e4e6eb;-webkit-text-stroke:0.55px #e4e6eb;letter-spacing:0.237px;">Video</div>
<div class="t" id="t_live2" style="left:486.50px;top:180.00px;font-size:14.5px;line-height:14.5px;color:#ffffff;-webkit-text-stroke:0.45px #ffffff;letter-spacing:0.412px;">LIVE</div>
<div class="t" id="t_expand" style="left:485.90px;top:396.00px;font-size:21px;line-height:21px;color:#e4e6eb;-webkit-text-stroke:0.55px #e4e6eb;letter-spacing:0.083px;">Expand video</div>
<div class="t" id="t_elogs" style="left:530.60px;top:475.00px;font-size:20.5px;line-height:20.5px;color:#e4e6eb;letter-spacing:0.092px;">Event logs</div>
<div class="t" id="t_ins" style="left:465.90px;top:580.50px;font-size:21px;line-height:21px;color:#e4e6eb;-webkit-text-stroke:0.55px #e4e6eb;letter-spacing:0.690px;">Insights</div>
<div class="t" id="t_z1" style="left:522.40px;top:627.00px;font-size:20px;line-height:20px;color:#e4e6eb;-webkit-text-stroke:0.35px #e4e6eb;">0</div>
<div class="t" id="t_viewers" style="left:522.40px;top:653.50px;font-size:15.5px;line-height:15.5px;color:#b0b3b8;letter-spacing:-0.216px;">Viewers</div>
<div class="t" id="t_z2" style="left:522.40px;top:682.00px;font-size:20px;line-height:20px;color:#e4e6eb;-webkit-text-stroke:0.35px #e4e6eb;">0</div>
<div class="t" id="t_comm" style="left:522.00px;top:708.50px;font-size:15.5px;line-height:15.5px;color:#b0b3b8;letter-spacing:-0.126px;">Comments</div>
<div class="t" id="t_z3" style="left:522.40px;top:737.00px;font-size:20px;line-height:20px;color:#e4e6eb;-webkit-text-stroke:0.35px #e4e6eb;">0</div>
<div class="t" id="t_react" style="left:521.00px;top:763.50px;font-size:15.5px;line-height:15.5px;color:#b0b3b8;letter-spacing:-0.047px;">Reactions</div>
<div class="t" id="t_z4" style="left:522.40px;top:792.00px;font-size:20px;line-height:20px;color:#e4e6eb;-webkit-text-stroke:0.35px #e4e6eb;">0</div>
<div class="t" id="t_polls" style="left:882.70px;top:109.50px;font-size:21px;line-height:21px;color:#e4e6eb;-webkit-text-stroke:0.55px #e4e6eb;letter-spacing:0.071px;">Polls</div>
<div class="t" id="t_create" style="left:877.90px;top:161.00px;font-size:21px;line-height:21px;color:#e4e6eb;-webkit-text-stroke:0.55px #e4e6eb;letter-spacing:0.141px;">Create a poll</div>
<div class="t" id="t_question" style="left:878.90px;top:204.50px;font-size:19px;line-height:19px;color:#e4e6eb;-webkit-text-stroke:0.55px #e4e6eb;letter-spacing:-0.154px;">Question</div>
<div class="t" id="t_qph" style="left:893.60px;top:243.00px;font-size:18.5px;line-height:18.5px;color:#6c6e72;letter-spacing:-0.079px;">Question</div>
<div class="t" id="t_options" style="left:878.90px;top:292.50px;font-size:19px;line-height:19px;color:#e4e6eb;-webkit-text-stroke:0.55px #e4e6eb;letter-spacing:0.020px;">Options</div>
<div class="t" id="t_op1" style="left:897.60px;top:334.00px;font-size:17.5px;line-height:17.5px;color:#6c6e72;letter-spacing:0.395px;">Option</div>
<div class="t" id="t_op2" style="left:897.60px;top:388.50px;font-size:17.5px;line-height:17.5px;color:#6c6e72;letter-spacing:0.395px;">Option</div>
<div class="t" id="t_add" style="left:899.70px;top:443.50px;font-size:17px;line-height:17px;color:#4a8bf0;letter-spacing:-0.081px;">Add an option</div>
<div class="t" id="t_clear" style="left:947.50px;top:515.50px;font-size:18.5px;line-height:18.5px;color:#8a8d91;-webkit-text-stroke:0.55px #8a8d91;letter-spacing:-0.337px;">Clear</div>
<div class="t" id="t_save" style="left:1138.80px;top:515.50px;font-size:18.5px;line-height:18.5px;color:#8a8d91;-webkit-text-stroke:0.55px #8a8d91;letter-spacing:-0.793px;">Save</div>
<div class="t" id="t_recent" style="left:882.90px;top:574.00px;font-size:20.5px;line-height:20.5px;color:#e4e6eb;-webkit-text-stroke:0.55px #e4e6eb;letter-spacing:0.431px;">Recent polls</div>
<div class="t" id="t_rd1" style="left:883.90px;top:599.50px;font-size:18px;line-height:18px;color:#b0b3b8;letter-spacing:0.045px;">Create polls to ask your audience questions</div>
<div class="t" id="t_rd2" style="left:883.90px;top:622.50px;font-size:18px;line-height:18px;color:#b0b3b8;letter-spacing:0.143px;">during the live video.</div>
<div class="t" id="t_cpoll" style="left:1018.20px;top:678.00px;font-size:18.5px;line-height:18.5px;color:#4b8ef0;-webkit-text-stroke:0.55px #4b8ef0;letter-spacing:0.245px;">Create poll</div>
<div class="t" id="t_post" style="left:882.90px;top:767.00px;font-size:21px;line-height:21px;color:#e4e6eb;-webkit-text-stroke:0.55px #e4e6eb;letter-spacing:0.331px;">Post details</div>
<div class="t" id="t_comments" style="left:1326.80px;top:29.50px;font-size:27.5px;line-height:27.5px;color:#e4e6eb;-webkit-text-stroke:1.05px #e4e6eb;letter-spacing:1.000px;">Comments</div>
<div class="t" id="t_nocom" style="left:1440.60px;top:137.00px;font-size:17px;line-height:17px;color:#b0b3b8;font-weight:bold;letter-spacing:0.333px;">No comments yet</div>
<div class="t" id="t_from" style="left:1357.90px;top:160.00px;font-size:15px;line-height:15px;color:#b0b3b8;letter-spacing:0.363px;">Comments from the audience will</div>
<div class="t" id="t_from2" style="left:1595.00px;top:160.00px;font-size:15px;line-height:15px;color:#b0b3b8;">show up here.</div>
<div class="t" id="t_write" style="left:1380.00px;top:746.50px;font-size:17px;line-height:17px;color:#b0b3b8;letter-spacing:0.470px;">Write a comment...</div>
<div class="t" id="t_press" style="left:1365.00px;top:778.00px;font-size:14.5px;line-height:14.5px;color:#d6d8dc;letter-spacing:0.015px;">Press Enter to post.</div>
</div>
</body></html>
